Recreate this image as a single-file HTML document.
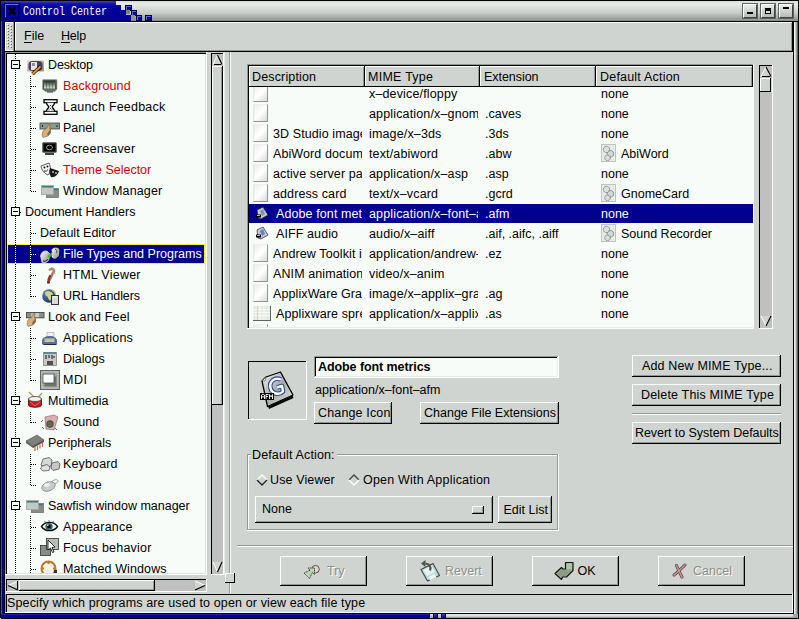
<!DOCTYPE html><html><head><meta charset="utf-8"><style>html,body{margin:0;padding:0;width:799px;height:619px;overflow:hidden;background:#000;}body>div,body>svg,div>div,div>svg{position:absolute;}*{font-family:"Liberation Sans",sans-serif;}</style></head><body><div style="left:0px;top:0px;width:799px;height:619px;background:#000000;"></div>
<div style="left:1px;top:1px;width:797px;height:617px;background:#d0d4d0;"></div>
<div style="left:1px;top:1px;width:1px;height:617px;background:#4848c8;"></div>
<div style="left:2px;top:2px;width:2px;height:616px;background:#0000a0;"></div>
<div style="left:4px;top:21px;width:1px;height:593px;background:#000000;"></div>
<div style="left:793px;top:21px;width:1px;height:593px;background:#000000;"></div>
<div style="left:794px;top:21px;width:1px;height:597px;background:#f0f4f0;"></div>
<div style="left:795px;top:21px;width:1px;height:597px;background:#c8ccc8;"></div>
<div style="left:796px;top:21px;width:1px;height:597px;background:#a0a4a0;"></div>
<div style="left:797px;top:21px;width:1px;height:597px;background:#606460;"></div>
<div style="left:798px;top:0px;width:1px;height:619px;background:#000000;"></div>
<div style="left:4px;top:613px;width:790px;height:1px;background:#000000;"></div>
<div style="left:1px;top:614px;width:428px;height:4px;background:linear-gradient(to bottom,#3030c0,#0000a0 40%,#000088);"></div>
<div style="left:446px;top:614px;width:347px;height:4px;background:linear-gradient(to bottom,#e8ece8,#d8dcd8 50%,#909490);"></div>
<div style="left:793px;top:614px;width:5px;height:4px;background:#a0a4a0;"></div>
<div style="left:429px;top:614px;width:17px;height:4px;background:#000030;"></div>
<div style="left:430px;top:614px;width:3px;height:4px;background:linear-gradient(to bottom,#e0e4e0,#a0a4a0);"></div>
<div style="left:434px;top:614px;width:3px;height:4px;background:linear-gradient(to bottom,#4040c8,#0000a0);"></div>
<div style="left:438px;top:614px;width:3px;height:4px;background:linear-gradient(to bottom,#e0e4e0,#a0a4a0);"></div>
<div style="left:442px;top:614px;width:3px;height:4px;background:linear-gradient(to bottom,#4040c8,#0000a0);"></div>
<div style="left:0px;top:618px;width:799px;height:1px;background:#000000;"></div>
<div style="left:0px;top:618px;width:1px;height:1px;background:#e0e0e0;"></div>
<div style="left:1px;top:1px;width:797px;height:20px;background:linear-gradient(to bottom,#d8dcd8 0px,#e8ece8 3px,#c8ccc8 12px,#8c908c 20px);"></div>
<div style="left:1px;top:1px;width:115px;height:20px;background:linear-gradient(to bottom,#4040c0 0px,#1010a8 3px,#0000a0 8px,#000088 20px);background-size:100% 20px;background-position:0 0px;"></div>
<div style="left:116px;top:5px;width:5px;height:16px;background:linear-gradient(to bottom,#4040c0 0px,#1010a8 3px,#0000a0 8px,#000088 20px);background-size:100% 20px;background-position:0 -4px;"></div>
<div style="left:121px;top:10px;width:5px;height:11px;background:linear-gradient(to bottom,#4040c0 0px,#1010a8 3px,#0000a0 8px,#000088 20px);background-size:100% 20px;background-position:0 -9px;"></div>
<div style="left:126px;top:15px;width:5px;height:6px;background:linear-gradient(to bottom,#4040c0 0px,#1010a8 3px,#0000a0 8px,#000088 20px);background-size:100% 20px;background-position:0 -14px;"></div>
<div style="left:125px;top:5px;width:7px;height:6px;background:#0000b0;border:1px solid #000040;box-sizing:border-box;box-shadow:inset 1px 1px 0 #6060d8;"></div>
<div style="left:131px;top:10px;width:6px;height:6px;background:#0000b0;border:1px solid #000040;box-sizing:border-box;box-shadow:inset 1px 1px 0 #6060d8;"></div>
<div style="left:136px;top:15px;width:6px;height:6px;background:#0000b0;border:1px solid #000040;box-sizing:border-box;box-shadow:inset 1px 1px 0 #6060d8;"></div>
<div style="left:145px;top:15px;width:7px;height:6px;background:#0000b0;border:1px solid #000040;box-sizing:border-box;box-shadow:inset 1px 1px 0 #6060d8;"></div>
<div style="left:126px;top:10px;width:4px;height:4px;background:#808480;"></div>
<div style="left:131px;top:15px;width:4px;height:5px;background:#909490;"></div>
<div style="left:4px;top:21px;width:794px;height:1px;background:#000000;"></div>
<div style="left:5px;top:4px;width:14px;height:14px;background:#0000a8;border-top:1px solid #6868d8;border-left:1px solid #6868d8;border-right:1px solid #000050;border-bottom:1px solid #000050;box-sizing:border-box;box-shadow:0 0 0 1px #000060;"></div>
<svg style="left:7px;top:6px;width:10px;height:10px;" viewBox="0 0 10 10"><path d="M1.5 1.5 L8.5 8.5 M8.5 1.5 L1.5 8.5" stroke="#000" stroke-width="2.6"/></svg>
<div style="left:23px;top:5.6px;font-size:10px;line-height:10px;color:#fff;white-space:nowrap;font-family:'Liberation Mono',monospace;transform:scaleY(1.35);transform-origin:0 0;">Control Center</div>
<div style="left:743px;top:4px;width:14px;height:14px;background:linear-gradient(to bottom,#e8ece8,#b8bcb8);border-top:1px solid #fff;border-left:1px solid #fff;border-right:1px solid #404040;border-bottom:1px solid #404040;box-sizing:border-box;box-shadow:0 0 0 1px #606460;"></div>
<div style="left:747px;top:12px;width:6px;height:2px;background:#000;"></div>
<div style="left:761px;top:4px;width:14px;height:14px;background:linear-gradient(to bottom,#e8ece8,#b8bcb8);border-top:1px solid #fff;border-left:1px solid #fff;border-right:1px solid #404040;border-bottom:1px solid #404040;box-sizing:border-box;box-shadow:0 0 0 1px #606460;"></div>
<div style="left:765px;top:8px;width:6px;height:6px;background:#000;"></div><div style="left:766px;top:11px;width:4px;height:2px;background:#e0e4e0;"></div>
<div style="left:779px;top:4px;width:14px;height:14px;background:linear-gradient(to bottom,#e8ece8,#b8bcb8);border-top:1px solid #fff;border-left:1px solid #fff;border-right:1px solid #404040;border-bottom:1px solid #404040;box-sizing:border-box;box-shadow:0 0 0 1px #606460;"></div>
<div style="left:783px;top:7px;width:6px;height:2px;background:#000;"></div>
<div style="left:5px;top:22px;width:788px;height:29px;background:#d0d4d0;"></div>
<div style="left:5px;top:22px;width:9px;height:29px;background:#ffffff;"></div>
<div style="left:6px;top:23px;width:7px;height:27px;background:#d0d4d0;"></div>
<div style="left:13px;top:22px;width:1px;height:29px;background:#949894;"></div>
<div style="left:7px;top:24px;width:1px;height:1px;background:#ffffff;"></div>
<div style="left:8px;top:25px;width:1px;height:1px;background:#606460;"></div>
<div style="left:10px;top:25px;width:1px;height:1px;background:#ffffff;"></div>
<div style="left:11px;top:26px;width:1px;height:1px;background:#606460;"></div>
<div style="left:7px;top:27px;width:1px;height:1px;background:#ffffff;"></div>
<div style="left:8px;top:28px;width:1px;height:1px;background:#606460;"></div>
<div style="left:10px;top:28px;width:1px;height:1px;background:#ffffff;"></div>
<div style="left:11px;top:29px;width:1px;height:1px;background:#606460;"></div>
<div style="left:7px;top:30px;width:1px;height:1px;background:#ffffff;"></div>
<div style="left:8px;top:31px;width:1px;height:1px;background:#606460;"></div>
<div style="left:10px;top:31px;width:1px;height:1px;background:#ffffff;"></div>
<div style="left:11px;top:32px;width:1px;height:1px;background:#606460;"></div>
<div style="left:7px;top:33px;width:1px;height:1px;background:#ffffff;"></div>
<div style="left:8px;top:34px;width:1px;height:1px;background:#606460;"></div>
<div style="left:10px;top:34px;width:1px;height:1px;background:#ffffff;"></div>
<div style="left:11px;top:35px;width:1px;height:1px;background:#606460;"></div>
<div style="left:7px;top:36px;width:1px;height:1px;background:#ffffff;"></div>
<div style="left:8px;top:37px;width:1px;height:1px;background:#606460;"></div>
<div style="left:10px;top:37px;width:1px;height:1px;background:#ffffff;"></div>
<div style="left:11px;top:38px;width:1px;height:1px;background:#606460;"></div>
<div style="left:7px;top:39px;width:1px;height:1px;background:#ffffff;"></div>
<div style="left:8px;top:40px;width:1px;height:1px;background:#606460;"></div>
<div style="left:10px;top:40px;width:1px;height:1px;background:#ffffff;"></div>
<div style="left:11px;top:41px;width:1px;height:1px;background:#606460;"></div>
<div style="left:7px;top:42px;width:1px;height:1px;background:#ffffff;"></div>
<div style="left:8px;top:43px;width:1px;height:1px;background:#606460;"></div>
<div style="left:10px;top:43px;width:1px;height:1px;background:#ffffff;"></div>
<div style="left:11px;top:44px;width:1px;height:1px;background:#606460;"></div>
<div style="left:7px;top:45px;width:1px;height:1px;background:#ffffff;"></div>
<div style="left:8px;top:46px;width:1px;height:1px;background:#606460;"></div>
<div style="left:10px;top:46px;width:1px;height:1px;background:#ffffff;"></div>
<div style="left:11px;top:47px;width:1px;height:1px;background:#606460;"></div>
<div style="left:14px;top:22px;width:1px;height:29px;background:#000000;"></div>
<div style="left:15px;top:22px;width:778px;height:1px;background:#ffffff;"></div>
<div style="left:15px;top:22px;width:1px;height:29px;background:#ffffff;"></div>
<div style="left:15px;top:50px;width:778px;height:1px;background:#949894;"></div>
<div style="left:791px;top:23px;width:1px;height:27px;background:#949894;"></div>
<div style="left:792px;top:22px;width:1px;height:29px;background:#000000;"></div>
<div style="left:5px;top:51px;width:788px;height:1px;background:#000000;"></div>
<div style="left:24px;top:29.00px;font-size:12.5px;line-height:14px;color:#000;white-space:nowrap;font-family:'Liberation Sans', sans-serif;letter-spacing:0px;">File</div>
<div style="left:24px;top:42px;width:8px;height:1px;background:#000000;"></div>
<div style="left:61px;top:29.00px;font-size:12.5px;line-height:14px;color:#000;white-space:nowrap;font-family:'Liberation Sans', sans-serif;letter-spacing:-0.2px;">Help</div>
<div style="left:61px;top:42px;width:9px;height:1px;background:#000000;"></div>
<div style="left:5px;top:52px;width:202px;height:523px;background:#d0d4d0;"></div>
<div style="left:5px;top:52px;width:202px;height:1px;background:#949894;"></div>
<div style="left:5px;top:52px;width:1px;height:523px;background:#949894;"></div>
<div style="left:6px;top:53px;width:200px;height:1px;background:#000000;"></div>
<div style="left:6px;top:53px;width:1px;height:521px;background:#000000;"></div>
<div style="left:7px;top:54px;width:198px;height:519px;background:#f8fcf8;"></div>
<div style="left:7px;top:573px;width:199px;height:1px;background:#e0e4e0;"></div>
<div style="left:205px;top:54px;width:1px;height:520px;background:#e0e4e0;"></div>
<div style="left:5px;top:574px;width:202px;height:1px;background:#ffffff;"></div>
<div style="left:206px;top:52px;width:1px;height:523px;background:#ffffff;"></div>
<div style="left:7px;top:54px;width:198px;height:519px;overflow:hidden;position:absolute;"><div style="left:-7px;top:-54px;width:799px;height:619px;position:absolute;"><div style="left:7px;top:244px;width:198px;height:20px;background:#f0f040;"></div><div style="left:8px;top:245px;width:196px;height:18px;background:#000090;"></div><div style="left:15px;top:54px;width:1px;height:1px;background:#000;"></div><div style="left:15px;top:56px;width:1px;height:1px;background:#000;"></div><div style="left:15px;top:58px;width:1px;height:1px;background:#000;"></div><div style="left:15px;top:70px;width:1px;height:1px;background:#000;"></div><div style="left:15px;top:72px;width:1px;height:1px;background:#000;"></div><div style="left:15px;top:74px;width:1px;height:1px;background:#000;"></div><div style="left:15px;top:76px;width:1px;height:1px;background:#000;"></div><div style="left:15px;top:78px;width:1px;height:1px;background:#000;"></div><div style="left:15px;top:80px;width:1px;height:1px;background:#000;"></div><div style="left:15px;top:82px;width:1px;height:1px;background:#000;"></div><div style="left:15px;top:84px;width:1px;height:1px;background:#000;"></div><div style="left:15px;top:86px;width:1px;height:1px;background:#000;"></div><div style="left:15px;top:88px;width:1px;height:1px;background:#000;"></div><div style="left:15px;top:90px;width:1px;height:1px;background:#000;"></div><div style="left:15px;top:92px;width:1px;height:1px;background:#000;"></div><div style="left:15px;top:94px;width:1px;height:1px;background:#000;"></div><div style="left:15px;top:96px;width:1px;height:1px;background:#000;"></div><div style="left:15px;top:98px;width:1px;height:1px;background:#000;"></div><div style="left:15px;top:100px;width:1px;height:1px;background:#000;"></div><div style="left:15px;top:102px;width:1px;height:1px;background:#000;"></div><div style="left:15px;top:104px;width:1px;height:1px;background:#000;"></div><div style="left:15px;top:106px;width:1px;height:1px;background:#000;"></div><div style="left:15px;top:108px;width:1px;height:1px;background:#000;"></div><div style="left:15px;top:110px;width:1px;height:1px;background:#000;"></div><div style="left:15px;top:112px;width:1px;height:1px;background:#000;"></div><div style="left:15px;top:114px;width:1px;height:1px;background:#000;"></div><div style="left:15px;top:116px;width:1px;height:1px;background:#000;"></div><div style="left:15px;top:118px;width:1px;height:1px;background:#000;"></div><div style="left:15px;top:120px;width:1px;height:1px;background:#000;"></div><div style="left:15px;top:122px;width:1px;height:1px;background:#000;"></div><div style="left:15px;top:124px;width:1px;height:1px;background:#000;"></div><div style="left:15px;top:126px;width:1px;height:1px;background:#000;"></div><div style="left:15px;top:128px;width:1px;height:1px;background:#000;"></div><div style="left:15px;top:130px;width:1px;height:1px;background:#000;"></div><div style="left:15px;top:132px;width:1px;height:1px;background:#000;"></div><div style="left:15px;top:134px;width:1px;height:1px;background:#000;"></div><div style="left:15px;top:136px;width:1px;height:1px;background:#000;"></div><div style="left:15px;top:138px;width:1px;height:1px;background:#000;"></div><div style="left:15px;top:140px;width:1px;height:1px;background:#000;"></div><div style="left:15px;top:142px;width:1px;height:1px;background:#000;"></div><div style="left:15px;top:144px;width:1px;height:1px;background:#000;"></div><div style="left:15px;top:146px;width:1px;height:1px;background:#000;"></div><div style="left:15px;top:148px;width:1px;height:1px;background:#000;"></div><div style="left:15px;top:150px;width:1px;height:1px;background:#000;"></div><div style="left:15px;top:152px;width:1px;height:1px;background:#000;"></div><div style="left:15px;top:154px;width:1px;height:1px;background:#000;"></div><div style="left:15px;top:156px;width:1px;height:1px;background:#000;"></div><div style="left:15px;top:158px;width:1px;height:1px;background:#000;"></div><div style="left:15px;top:160px;width:1px;height:1px;background:#000;"></div><div style="left:15px;top:162px;width:1px;height:1px;background:#000;"></div><div style="left:15px;top:164px;width:1px;height:1px;background:#000;"></div><div style="left:15px;top:166px;width:1px;height:1px;background:#000;"></div><div style="left:15px;top:168px;width:1px;height:1px;background:#000;"></div><div style="left:15px;top:170px;width:1px;height:1px;background:#000;"></div><div style="left:15px;top:172px;width:1px;height:1px;background:#000;"></div><div style="left:15px;top:174px;width:1px;height:1px;background:#000;"></div><div style="left:15px;top:176px;width:1px;height:1px;background:#000;"></div><div style="left:15px;top:178px;width:1px;height:1px;background:#000;"></div><div style="left:15px;top:180px;width:1px;height:1px;background:#000;"></div><div style="left:15px;top:182px;width:1px;height:1px;background:#000;"></div><div style="left:15px;top:184px;width:1px;height:1px;background:#000;"></div><div style="left:15px;top:186px;width:1px;height:1px;background:#000;"></div><div style="left:15px;top:188px;width:1px;height:1px;background:#000;"></div><div style="left:15px;top:190px;width:1px;height:1px;background:#000;"></div><div style="left:15px;top:192px;width:1px;height:1px;background:#000;"></div><div style="left:15px;top:194px;width:1px;height:1px;background:#000;"></div><div style="left:15px;top:196px;width:1px;height:1px;background:#000;"></div><div style="left:15px;top:198px;width:1px;height:1px;background:#000;"></div><div style="left:15px;top:200px;width:1px;height:1px;background:#000;"></div><div style="left:15px;top:202px;width:1px;height:1px;background:#000;"></div><div style="left:15px;top:204px;width:1px;height:1px;background:#000;"></div><div style="left:15px;top:206px;width:1px;height:1px;background:#000;"></div><div style="left:15px;top:216px;width:1px;height:1px;background:#000;"></div><div style="left:15px;top:218px;width:1px;height:1px;background:#000;"></div><div style="left:15px;top:220px;width:1px;height:1px;background:#000;"></div><div style="left:15px;top:222px;width:1px;height:1px;background:#000;"></div><div style="left:15px;top:224px;width:1px;height:1px;background:#000;"></div><div style="left:15px;top:226px;width:1px;height:1px;background:#000;"></div><div style="left:15px;top:228px;width:1px;height:1px;background:#000;"></div><div style="left:15px;top:230px;width:1px;height:1px;background:#000;"></div><div style="left:15px;top:232px;width:1px;height:1px;background:#000;"></div><div style="left:15px;top:234px;width:1px;height:1px;background:#000;"></div><div style="left:15px;top:236px;width:1px;height:1px;background:#000;"></div><div style="left:15px;top:238px;width:1px;height:1px;background:#000;"></div><div style="left:15px;top:240px;width:1px;height:1px;background:#000;"></div><div style="left:15px;top:242px;width:1px;height:1px;background:#000;"></div><div style="left:15px;top:244px;width:1px;height:1px;background:#000;"></div><div style="left:15px;top:246px;width:1px;height:1px;background:#fff;"></div><div style="left:15px;top:248px;width:1px;height:1px;background:#fff;"></div><div style="left:15px;top:250px;width:1px;height:1px;background:#fff;"></div><div style="left:15px;top:252px;width:1px;height:1px;background:#fff;"></div><div style="left:15px;top:254px;width:1px;height:1px;background:#fff;"></div><div style="left:15px;top:256px;width:1px;height:1px;background:#fff;"></div><div style="left:15px;top:258px;width:1px;height:1px;background:#fff;"></div><div style="left:15px;top:260px;width:1px;height:1px;background:#fff;"></div><div style="left:15px;top:262px;width:1px;height:1px;background:#fff;"></div><div style="left:15px;top:264px;width:1px;height:1px;background:#000;"></div><div style="left:15px;top:266px;width:1px;height:1px;background:#000;"></div><div style="left:15px;top:268px;width:1px;height:1px;background:#000;"></div><div style="left:15px;top:270px;width:1px;height:1px;background:#000;"></div><div style="left:15px;top:272px;width:1px;height:1px;background:#000;"></div><div style="left:15px;top:274px;width:1px;height:1px;background:#000;"></div><div style="left:15px;top:276px;width:1px;height:1px;background:#000;"></div><div style="left:15px;top:278px;width:1px;height:1px;background:#000;"></div><div style="left:15px;top:280px;width:1px;height:1px;background:#000;"></div><div style="left:15px;top:282px;width:1px;height:1px;background:#000;"></div><div style="left:15px;top:284px;width:1px;height:1px;background:#000;"></div><div style="left:15px;top:286px;width:1px;height:1px;background:#000;"></div><div style="left:15px;top:288px;width:1px;height:1px;background:#000;"></div><div style="left:15px;top:290px;width:1px;height:1px;background:#000;"></div><div style="left:15px;top:292px;width:1px;height:1px;background:#000;"></div><div style="left:15px;top:294px;width:1px;height:1px;background:#000;"></div><div style="left:15px;top:296px;width:1px;height:1px;background:#000;"></div><div style="left:15px;top:298px;width:1px;height:1px;background:#000;"></div><div style="left:15px;top:300px;width:1px;height:1px;background:#000;"></div><div style="left:15px;top:302px;width:1px;height:1px;background:#000;"></div><div style="left:15px;top:304px;width:1px;height:1px;background:#000;"></div><div style="left:15px;top:306px;width:1px;height:1px;background:#000;"></div><div style="left:15px;top:308px;width:1px;height:1px;background:#000;"></div><div style="left:15px;top:310px;width:1px;height:1px;background:#000;"></div><div style="left:15px;top:322px;width:1px;height:1px;background:#000;"></div><div style="left:15px;top:324px;width:1px;height:1px;background:#000;"></div><div style="left:15px;top:326px;width:1px;height:1px;background:#000;"></div><div style="left:15px;top:328px;width:1px;height:1px;background:#000;"></div><div style="left:15px;top:330px;width:1px;height:1px;background:#000;"></div><div style="left:15px;top:332px;width:1px;height:1px;background:#000;"></div><div style="left:15px;top:334px;width:1px;height:1px;background:#000;"></div><div style="left:15px;top:336px;width:1px;height:1px;background:#000;"></div><div style="left:15px;top:338px;width:1px;height:1px;background:#000;"></div><div style="left:15px;top:340px;width:1px;height:1px;background:#000;"></div><div style="left:15px;top:342px;width:1px;height:1px;background:#000;"></div><div style="left:15px;top:344px;width:1px;height:1px;background:#000;"></div><div style="left:15px;top:346px;width:1px;height:1px;background:#000;"></div><div style="left:15px;top:348px;width:1px;height:1px;background:#000;"></div><div style="left:15px;top:350px;width:1px;height:1px;background:#000;"></div><div style="left:15px;top:352px;width:1px;height:1px;background:#000;"></div><div style="left:15px;top:354px;width:1px;height:1px;background:#000;"></div><div style="left:15px;top:356px;width:1px;height:1px;background:#000;"></div><div style="left:15px;top:358px;width:1px;height:1px;background:#000;"></div><div style="left:15px;top:360px;width:1px;height:1px;background:#000;"></div><div style="left:15px;top:362px;width:1px;height:1px;background:#000;"></div><div style="left:15px;top:364px;width:1px;height:1px;background:#000;"></div><div style="left:15px;top:366px;width:1px;height:1px;background:#000;"></div><div style="left:15px;top:368px;width:1px;height:1px;background:#000;"></div><div style="left:15px;top:370px;width:1px;height:1px;background:#000;"></div><div style="left:15px;top:372px;width:1px;height:1px;background:#000;"></div><div style="left:15px;top:374px;width:1px;height:1px;background:#000;"></div><div style="left:15px;top:376px;width:1px;height:1px;background:#000;"></div><div style="left:15px;top:378px;width:1px;height:1px;background:#000;"></div><div style="left:15px;top:380px;width:1px;height:1px;background:#000;"></div><div style="left:15px;top:382px;width:1px;height:1px;background:#000;"></div><div style="left:15px;top:384px;width:1px;height:1px;background:#000;"></div><div style="left:15px;top:386px;width:1px;height:1px;background:#000;"></div><div style="left:15px;top:388px;width:1px;height:1px;background:#000;"></div><div style="left:15px;top:390px;width:1px;height:1px;background:#000;"></div><div style="left:15px;top:392px;width:1px;height:1px;background:#000;"></div><div style="left:15px;top:394px;width:1px;height:1px;background:#000;"></div><div style="left:15px;top:406px;width:1px;height:1px;background:#000;"></div><div style="left:15px;top:408px;width:1px;height:1px;background:#000;"></div><div style="left:15px;top:410px;width:1px;height:1px;background:#000;"></div><div style="left:15px;top:412px;width:1px;height:1px;background:#000;"></div><div style="left:15px;top:414px;width:1px;height:1px;background:#000;"></div><div style="left:15px;top:416px;width:1px;height:1px;background:#000;"></div><div style="left:15px;top:418px;width:1px;height:1px;background:#000;"></div><div style="left:15px;top:420px;width:1px;height:1px;background:#000;"></div><div style="left:15px;top:422px;width:1px;height:1px;background:#000;"></div><div style="left:15px;top:424px;width:1px;height:1px;background:#000;"></div><div style="left:15px;top:426px;width:1px;height:1px;background:#000;"></div><div style="left:15px;top:428px;width:1px;height:1px;background:#000;"></div><div style="left:15px;top:430px;width:1px;height:1px;background:#000;"></div><div style="left:15px;top:432px;width:1px;height:1px;background:#000;"></div><div style="left:15px;top:434px;width:1px;height:1px;background:#000;"></div><div style="left:15px;top:436px;width:1px;height:1px;background:#000;"></div><div style="left:15px;top:448px;width:1px;height:1px;background:#000;"></div><div style="left:15px;top:450px;width:1px;height:1px;background:#000;"></div><div style="left:15px;top:452px;width:1px;height:1px;background:#000;"></div><div style="left:15px;top:454px;width:1px;height:1px;background:#000;"></div><div style="left:15px;top:456px;width:1px;height:1px;background:#000;"></div><div style="left:15px;top:458px;width:1px;height:1px;background:#000;"></div><div style="left:15px;top:460px;width:1px;height:1px;background:#000;"></div><div style="left:15px;top:462px;width:1px;height:1px;background:#000;"></div><div style="left:15px;top:464px;width:1px;height:1px;background:#000;"></div><div style="left:15px;top:466px;width:1px;height:1px;background:#000;"></div><div style="left:15px;top:468px;width:1px;height:1px;background:#000;"></div><div style="left:15px;top:470px;width:1px;height:1px;background:#000;"></div><div style="left:15px;top:472px;width:1px;height:1px;background:#000;"></div><div style="left:15px;top:474px;width:1px;height:1px;background:#000;"></div><div style="left:15px;top:476px;width:1px;height:1px;background:#000;"></div><div style="left:15px;top:478px;width:1px;height:1px;background:#000;"></div><div style="left:15px;top:480px;width:1px;height:1px;background:#000;"></div><div style="left:15px;top:482px;width:1px;height:1px;background:#000;"></div><div style="left:15px;top:484px;width:1px;height:1px;background:#000;"></div><div style="left:15px;top:486px;width:1px;height:1px;background:#000;"></div><div style="left:15px;top:488px;width:1px;height:1px;background:#000;"></div><div style="left:15px;top:490px;width:1px;height:1px;background:#000;"></div><div style="left:15px;top:492px;width:1px;height:1px;background:#000;"></div><div style="left:15px;top:494px;width:1px;height:1px;background:#000;"></div><div style="left:15px;top:496px;width:1px;height:1px;background:#000;"></div><div style="left:15px;top:498px;width:1px;height:1px;background:#000;"></div><div style="left:15px;top:500px;width:1px;height:1px;background:#000;"></div><div style="left:15px;top:510px;width:1px;height:1px;background:#000;"></div><div style="left:15px;top:512px;width:1px;height:1px;background:#000;"></div><div style="left:15px;top:514px;width:1px;height:1px;background:#000;"></div><div style="left:15px;top:516px;width:1px;height:1px;background:#000;"></div><div style="left:15px;top:518px;width:1px;height:1px;background:#000;"></div><div style="left:15px;top:520px;width:1px;height:1px;background:#000;"></div><div style="left:15px;top:522px;width:1px;height:1px;background:#000;"></div><div style="left:15px;top:524px;width:1px;height:1px;background:#000;"></div><div style="left:15px;top:526px;width:1px;height:1px;background:#000;"></div><div style="left:15px;top:528px;width:1px;height:1px;background:#000;"></div><div style="left:15px;top:530px;width:1px;height:1px;background:#000;"></div><div style="left:15px;top:532px;width:1px;height:1px;background:#000;"></div><div style="left:15px;top:534px;width:1px;height:1px;background:#000;"></div><div style="left:15px;top:536px;width:1px;height:1px;background:#000;"></div><div style="left:15px;top:538px;width:1px;height:1px;background:#000;"></div><div style="left:15px;top:540px;width:1px;height:1px;background:#000;"></div><div style="left:15px;top:542px;width:1px;height:1px;background:#000;"></div><div style="left:15px;top:544px;width:1px;height:1px;background:#000;"></div><div style="left:15px;top:546px;width:1px;height:1px;background:#000;"></div><div style="left:15px;top:548px;width:1px;height:1px;background:#000;"></div><div style="left:15px;top:550px;width:1px;height:1px;background:#000;"></div><div style="left:15px;top:552px;width:1px;height:1px;background:#000;"></div><div style="left:15px;top:554px;width:1px;height:1px;background:#000;"></div><div style="left:15px;top:556px;width:1px;height:1px;background:#000;"></div><div style="left:15px;top:558px;width:1px;height:1px;background:#000;"></div><div style="left:15px;top:560px;width:1px;height:1px;background:#000;"></div><div style="left:15px;top:562px;width:1px;height:1px;background:#000;"></div><div style="left:15px;top:564px;width:1px;height:1px;background:#000;"></div><div style="left:15px;top:566px;width:1px;height:1px;background:#000;"></div><div style="left:15px;top:568px;width:1px;height:1px;background:#000;"></div><div style="left:15px;top:570px;width:1px;height:1px;background:#000;"></div><div style="left:15px;top:572px;width:1px;height:1px;background:#000;"></div><div style="left:11px;top:60px;width:9px;height:9px;background:#000;"></div><div style="left:12px;top:61px;width:7px;height:7px;background:#f8fcf8;"></div><div style="left:13px;top:64px;width:5px;height:1px;background:#000;"></div><div style="left:20px;top:65px;width:1px;height:1px;background:#000;"></div><div style="left:11px;top:207px;width:9px;height:9px;background:#000;"></div><div style="left:12px;top:208px;width:7px;height:7px;background:#f8fcf8;"></div><div style="left:13px;top:211px;width:5px;height:1px;background:#000;"></div><div style="left:20px;top:212px;width:1px;height:1px;background:#000;"></div><div style="left:11px;top:312px;width:9px;height:9px;background:#000;"></div><div style="left:12px;top:313px;width:7px;height:7px;background:#f8fcf8;"></div><div style="left:13px;top:316px;width:5px;height:1px;background:#000;"></div><div style="left:20px;top:317px;width:1px;height:1px;background:#000;"></div><div style="left:11px;top:396px;width:9px;height:9px;background:#000;"></div><div style="left:12px;top:397px;width:7px;height:7px;background:#f8fcf8;"></div><div style="left:13px;top:400px;width:5px;height:1px;background:#000;"></div><div style="left:20px;top:401px;width:1px;height:1px;background:#000;"></div><div style="left:11px;top:438px;width:9px;height:9px;background:#000;"></div><div style="left:12px;top:439px;width:7px;height:7px;background:#f8fcf8;"></div><div style="left:13px;top:442px;width:5px;height:1px;background:#000;"></div><div style="left:20px;top:443px;width:1px;height:1px;background:#000;"></div><div style="left:11px;top:501px;width:9px;height:9px;background:#000;"></div><div style="left:12px;top:502px;width:7px;height:7px;background:#f8fcf8;"></div><div style="left:13px;top:505px;width:5px;height:1px;background:#000;"></div><div style="left:20px;top:506px;width:1px;height:1px;background:#000;"></div><div style="left:30px;top:76px;width:1px;height:1px;background:#000;"></div><div style="left:30px;top:78px;width:1px;height:1px;background:#000;"></div><div style="left:30px;top:80px;width:1px;height:1px;background:#000;"></div><div style="left:30px;top:82px;width:1px;height:1px;background:#000;"></div><div style="left:30px;top:84px;width:1px;height:1px;background:#000;"></div><div style="left:30px;top:86px;width:1px;height:1px;background:#000;"></div><div style="left:30px;top:88px;width:1px;height:1px;background:#000;"></div><div style="left:30px;top:90px;width:1px;height:1px;background:#000;"></div><div style="left:30px;top:92px;width:1px;height:1px;background:#000;"></div><div style="left:30px;top:94px;width:1px;height:1px;background:#000;"></div><div style="left:30px;top:96px;width:1px;height:1px;background:#000;"></div><div style="left:30px;top:98px;width:1px;height:1px;background:#000;"></div><div style="left:30px;top:100px;width:1px;height:1px;background:#000;"></div><div style="left:30px;top:102px;width:1px;height:1px;background:#000;"></div><div style="left:30px;top:104px;width:1px;height:1px;background:#000;"></div><div style="left:30px;top:106px;width:1px;height:1px;background:#000;"></div><div style="left:30px;top:108px;width:1px;height:1px;background:#000;"></div><div style="left:30px;top:110px;width:1px;height:1px;background:#000;"></div><div style="left:30px;top:112px;width:1px;height:1px;background:#000;"></div><div style="left:30px;top:114px;width:1px;height:1px;background:#000;"></div><div style="left:30px;top:116px;width:1px;height:1px;background:#000;"></div><div style="left:30px;top:118px;width:1px;height:1px;background:#000;"></div><div style="left:30px;top:120px;width:1px;height:1px;background:#000;"></div><div style="left:30px;top:122px;width:1px;height:1px;background:#000;"></div><div style="left:30px;top:124px;width:1px;height:1px;background:#000;"></div><div style="left:30px;top:126px;width:1px;height:1px;background:#000;"></div><div style="left:30px;top:128px;width:1px;height:1px;background:#000;"></div><div style="left:30px;top:130px;width:1px;height:1px;background:#000;"></div><div style="left:30px;top:132px;width:1px;height:1px;background:#000;"></div><div style="left:30px;top:134px;width:1px;height:1px;background:#000;"></div><div style="left:30px;top:136px;width:1px;height:1px;background:#000;"></div><div style="left:30px;top:138px;width:1px;height:1px;background:#000;"></div><div style="left:30px;top:140px;width:1px;height:1px;background:#000;"></div><div style="left:30px;top:142px;width:1px;height:1px;background:#000;"></div><div style="left:30px;top:144px;width:1px;height:1px;background:#000;"></div><div style="left:30px;top:146px;width:1px;height:1px;background:#000;"></div><div style="left:30px;top:148px;width:1px;height:1px;background:#000;"></div><div style="left:30px;top:150px;width:1px;height:1px;background:#000;"></div><div style="left:30px;top:152px;width:1px;height:1px;background:#000;"></div><div style="left:30px;top:154px;width:1px;height:1px;background:#000;"></div><div style="left:30px;top:156px;width:1px;height:1px;background:#000;"></div><div style="left:30px;top:158px;width:1px;height:1px;background:#000;"></div><div style="left:30px;top:160px;width:1px;height:1px;background:#000;"></div><div style="left:30px;top:162px;width:1px;height:1px;background:#000;"></div><div style="left:30px;top:164px;width:1px;height:1px;background:#000;"></div><div style="left:30px;top:166px;width:1px;height:1px;background:#000;"></div><div style="left:30px;top:168px;width:1px;height:1px;background:#000;"></div><div style="left:30px;top:170px;width:1px;height:1px;background:#000;"></div><div style="left:30px;top:172px;width:1px;height:1px;background:#000;"></div><div style="left:30px;top:174px;width:1px;height:1px;background:#000;"></div><div style="left:30px;top:176px;width:1px;height:1px;background:#000;"></div><div style="left:30px;top:178px;width:1px;height:1px;background:#000;"></div><div style="left:30px;top:180px;width:1px;height:1px;background:#000;"></div><div style="left:30px;top:182px;width:1px;height:1px;background:#000;"></div><div style="left:30px;top:184px;width:1px;height:1px;background:#000;"></div><div style="left:30px;top:186px;width:1px;height:1px;background:#000;"></div><div style="left:30px;top:188px;width:1px;height:1px;background:#000;"></div><div style="left:30px;top:190px;width:1px;height:1px;background:#000;"></div><div style="left:31px;top:86px;width:1px;height:1px;background:#000;"></div><div style="left:33px;top:86px;width:1px;height:1px;background:#000;"></div><div style="left:35px;top:86px;width:1px;height:1px;background:#000;"></div><div style="left:31px;top:107px;width:1px;height:1px;background:#000;"></div><div style="left:33px;top:107px;width:1px;height:1px;background:#000;"></div><div style="left:35px;top:107px;width:1px;height:1px;background:#000;"></div><div style="left:31px;top:128px;width:1px;height:1px;background:#000;"></div><div style="left:33px;top:128px;width:1px;height:1px;background:#000;"></div><div style="left:35px;top:128px;width:1px;height:1px;background:#000;"></div><div style="left:31px;top:149px;width:1px;height:1px;background:#000;"></div><div style="left:33px;top:149px;width:1px;height:1px;background:#000;"></div><div style="left:35px;top:149px;width:1px;height:1px;background:#000;"></div><div style="left:31px;top:170px;width:1px;height:1px;background:#000;"></div><div style="left:33px;top:170px;width:1px;height:1px;background:#000;"></div><div style="left:35px;top:170px;width:1px;height:1px;background:#000;"></div><div style="left:31px;top:191px;width:1px;height:1px;background:#000;"></div><div style="left:33px;top:191px;width:1px;height:1px;background:#000;"></div><div style="left:35px;top:191px;width:1px;height:1px;background:#000;"></div><div style="left:30px;top:222px;width:1px;height:1px;background:#000;"></div><div style="left:30px;top:224px;width:1px;height:1px;background:#000;"></div><div style="left:30px;top:226px;width:1px;height:1px;background:#000;"></div><div style="left:30px;top:228px;width:1px;height:1px;background:#000;"></div><div style="left:30px;top:230px;width:1px;height:1px;background:#000;"></div><div style="left:30px;top:232px;width:1px;height:1px;background:#000;"></div><div style="left:30px;top:234px;width:1px;height:1px;background:#000;"></div><div style="left:30px;top:236px;width:1px;height:1px;background:#000;"></div><div style="left:30px;top:238px;width:1px;height:1px;background:#000;"></div><div style="left:30px;top:240px;width:1px;height:1px;background:#000;"></div><div style="left:30px;top:242px;width:1px;height:1px;background:#000;"></div><div style="left:30px;top:244px;width:1px;height:1px;background:#000;"></div><div style="left:30px;top:246px;width:1px;height:1px;background:#fff;"></div><div style="left:30px;top:248px;width:1px;height:1px;background:#fff;"></div><div style="left:30px;top:250px;width:1px;height:1px;background:#fff;"></div><div style="left:30px;top:252px;width:1px;height:1px;background:#fff;"></div><div style="left:30px;top:254px;width:1px;height:1px;background:#fff;"></div><div style="left:30px;top:256px;width:1px;height:1px;background:#fff;"></div><div style="left:30px;top:258px;width:1px;height:1px;background:#fff;"></div><div style="left:30px;top:260px;width:1px;height:1px;background:#fff;"></div><div style="left:30px;top:262px;width:1px;height:1px;background:#fff;"></div><div style="left:30px;top:264px;width:1px;height:1px;background:#000;"></div><div style="left:30px;top:266px;width:1px;height:1px;background:#000;"></div><div style="left:30px;top:268px;width:1px;height:1px;background:#000;"></div><div style="left:30px;top:270px;width:1px;height:1px;background:#000;"></div><div style="left:30px;top:272px;width:1px;height:1px;background:#000;"></div><div style="left:30px;top:274px;width:1px;height:1px;background:#000;"></div><div style="left:30px;top:276px;width:1px;height:1px;background:#000;"></div><div style="left:30px;top:278px;width:1px;height:1px;background:#000;"></div><div style="left:30px;top:280px;width:1px;height:1px;background:#000;"></div><div style="left:30px;top:282px;width:1px;height:1px;background:#000;"></div><div style="left:30px;top:284px;width:1px;height:1px;background:#000;"></div><div style="left:30px;top:286px;width:1px;height:1px;background:#000;"></div><div style="left:30px;top:288px;width:1px;height:1px;background:#000;"></div><div style="left:30px;top:290px;width:1px;height:1px;background:#000;"></div><div style="left:30px;top:292px;width:1px;height:1px;background:#000;"></div><div style="left:30px;top:294px;width:1px;height:1px;background:#000;"></div><div style="left:30px;top:296px;width:1px;height:1px;background:#000;"></div><div style="left:31px;top:233px;width:1px;height:1px;background:#000;"></div><div style="left:33px;top:233px;width:1px;height:1px;background:#000;"></div><div style="left:35px;top:233px;width:1px;height:1px;background:#000;"></div><div style="left:31px;top:254px;width:1px;height:1px;background:#fff;"></div><div style="left:33px;top:254px;width:1px;height:1px;background:#fff;"></div><div style="left:35px;top:254px;width:1px;height:1px;background:#fff;"></div><div style="left:31px;top:275px;width:1px;height:1px;background:#000;"></div><div style="left:33px;top:275px;width:1px;height:1px;background:#000;"></div><div style="left:35px;top:275px;width:1px;height:1px;background:#000;"></div><div style="left:31px;top:296px;width:1px;height:1px;background:#000;"></div><div style="left:33px;top:296px;width:1px;height:1px;background:#000;"></div><div style="left:35px;top:296px;width:1px;height:1px;background:#000;"></div><div style="left:30px;top:328px;width:1px;height:1px;background:#000;"></div><div style="left:30px;top:330px;width:1px;height:1px;background:#000;"></div><div style="left:30px;top:332px;width:1px;height:1px;background:#000;"></div><div style="left:30px;top:334px;width:1px;height:1px;background:#000;"></div><div style="left:30px;top:336px;width:1px;height:1px;background:#000;"></div><div style="left:30px;top:338px;width:1px;height:1px;background:#000;"></div><div style="left:30px;top:340px;width:1px;height:1px;background:#000;"></div><div style="left:30px;top:342px;width:1px;height:1px;background:#000;"></div><div style="left:30px;top:344px;width:1px;height:1px;background:#000;"></div><div style="left:30px;top:346px;width:1px;height:1px;background:#000;"></div><div style="left:30px;top:348px;width:1px;height:1px;background:#000;"></div><div style="left:30px;top:350px;width:1px;height:1px;background:#000;"></div><div style="left:30px;top:352px;width:1px;height:1px;background:#000;"></div><div style="left:30px;top:354px;width:1px;height:1px;background:#000;"></div><div style="left:30px;top:356px;width:1px;height:1px;background:#000;"></div><div style="left:30px;top:358px;width:1px;height:1px;background:#000;"></div><div style="left:30px;top:360px;width:1px;height:1px;background:#000;"></div><div style="left:30px;top:362px;width:1px;height:1px;background:#000;"></div><div style="left:30px;top:364px;width:1px;height:1px;background:#000;"></div><div style="left:30px;top:366px;width:1px;height:1px;background:#000;"></div><div style="left:30px;top:368px;width:1px;height:1px;background:#000;"></div><div style="left:30px;top:370px;width:1px;height:1px;background:#000;"></div><div style="left:30px;top:372px;width:1px;height:1px;background:#000;"></div><div style="left:30px;top:374px;width:1px;height:1px;background:#000;"></div><div style="left:30px;top:376px;width:1px;height:1px;background:#000;"></div><div style="left:30px;top:378px;width:1px;height:1px;background:#000;"></div><div style="left:30px;top:380px;width:1px;height:1px;background:#000;"></div><div style="left:31px;top:338px;width:1px;height:1px;background:#000;"></div><div style="left:33px;top:338px;width:1px;height:1px;background:#000;"></div><div style="left:35px;top:338px;width:1px;height:1px;background:#000;"></div><div style="left:31px;top:359px;width:1px;height:1px;background:#000;"></div><div style="left:33px;top:359px;width:1px;height:1px;background:#000;"></div><div style="left:35px;top:359px;width:1px;height:1px;background:#000;"></div><div style="left:31px;top:380px;width:1px;height:1px;background:#000;"></div><div style="left:33px;top:380px;width:1px;height:1px;background:#000;"></div><div style="left:35px;top:380px;width:1px;height:1px;background:#000;"></div><div style="left:30px;top:412px;width:1px;height:1px;background:#000;"></div><div style="left:30px;top:414px;width:1px;height:1px;background:#000;"></div><div style="left:30px;top:416px;width:1px;height:1px;background:#000;"></div><div style="left:30px;top:418px;width:1px;height:1px;background:#000;"></div><div style="left:30px;top:420px;width:1px;height:1px;background:#000;"></div><div style="left:30px;top:422px;width:1px;height:1px;background:#000;"></div><div style="left:31px;top:422px;width:1px;height:1px;background:#000;"></div><div style="left:33px;top:422px;width:1px;height:1px;background:#000;"></div><div style="left:35px;top:422px;width:1px;height:1px;background:#000;"></div><div style="left:30px;top:454px;width:1px;height:1px;background:#000;"></div><div style="left:30px;top:456px;width:1px;height:1px;background:#000;"></div><div style="left:30px;top:458px;width:1px;height:1px;background:#000;"></div><div style="left:30px;top:460px;width:1px;height:1px;background:#000;"></div><div style="left:30px;top:462px;width:1px;height:1px;background:#000;"></div><div style="left:30px;top:464px;width:1px;height:1px;background:#000;"></div><div style="left:30px;top:466px;width:1px;height:1px;background:#000;"></div><div style="left:30px;top:468px;width:1px;height:1px;background:#000;"></div><div style="left:30px;top:470px;width:1px;height:1px;background:#000;"></div><div style="left:30px;top:472px;width:1px;height:1px;background:#000;"></div><div style="left:30px;top:474px;width:1px;height:1px;background:#000;"></div><div style="left:30px;top:476px;width:1px;height:1px;background:#000;"></div><div style="left:30px;top:478px;width:1px;height:1px;background:#000;"></div><div style="left:30px;top:480px;width:1px;height:1px;background:#000;"></div><div style="left:30px;top:482px;width:1px;height:1px;background:#000;"></div><div style="left:30px;top:484px;width:1px;height:1px;background:#000;"></div><div style="left:31px;top:464px;width:1px;height:1px;background:#000;"></div><div style="left:33px;top:464px;width:1px;height:1px;background:#000;"></div><div style="left:35px;top:464px;width:1px;height:1px;background:#000;"></div><div style="left:31px;top:485px;width:1px;height:1px;background:#000;"></div><div style="left:33px;top:485px;width:1px;height:1px;background:#000;"></div><div style="left:35px;top:485px;width:1px;height:1px;background:#000;"></div><div style="left:30px;top:516px;width:1px;height:1px;background:#000;"></div><div style="left:30px;top:518px;width:1px;height:1px;background:#000;"></div><div style="left:30px;top:520px;width:1px;height:1px;background:#000;"></div><div style="left:30px;top:522px;width:1px;height:1px;background:#000;"></div><div style="left:30px;top:524px;width:1px;height:1px;background:#000;"></div><div style="left:30px;top:526px;width:1px;height:1px;background:#000;"></div><div style="left:30px;top:528px;width:1px;height:1px;background:#000;"></div><div style="left:30px;top:530px;width:1px;height:1px;background:#000;"></div><div style="left:30px;top:532px;width:1px;height:1px;background:#000;"></div><div style="left:30px;top:534px;width:1px;height:1px;background:#000;"></div><div style="left:30px;top:536px;width:1px;height:1px;background:#000;"></div><div style="left:30px;top:538px;width:1px;height:1px;background:#000;"></div><div style="left:30px;top:540px;width:1px;height:1px;background:#000;"></div><div style="left:30px;top:542px;width:1px;height:1px;background:#000;"></div><div style="left:30px;top:544px;width:1px;height:1px;background:#000;"></div><div style="left:30px;top:546px;width:1px;height:1px;background:#000;"></div><div style="left:30px;top:548px;width:1px;height:1px;background:#000;"></div><div style="left:30px;top:550px;width:1px;height:1px;background:#000;"></div><div style="left:30px;top:552px;width:1px;height:1px;background:#000;"></div><div style="left:30px;top:554px;width:1px;height:1px;background:#000;"></div><div style="left:30px;top:556px;width:1px;height:1px;background:#000;"></div><div style="left:30px;top:558px;width:1px;height:1px;background:#000;"></div><div style="left:30px;top:560px;width:1px;height:1px;background:#000;"></div><div style="left:30px;top:562px;width:1px;height:1px;background:#000;"></div><div style="left:30px;top:564px;width:1px;height:1px;background:#000;"></div><div style="left:30px;top:566px;width:1px;height:1px;background:#000;"></div><div style="left:30px;top:568px;width:1px;height:1px;background:#000;"></div><div style="left:30px;top:570px;width:1px;height:1px;background:#000;"></div><div style="left:30px;top:572px;width:1px;height:1px;background:#000;"></div><div style="left:31px;top:527px;width:1px;height:1px;background:#000;"></div><div style="left:33px;top:527px;width:1px;height:1px;background:#000;"></div><div style="left:35px;top:527px;width:1px;height:1px;background:#000;"></div><div style="left:31px;top:548px;width:1px;height:1px;background:#000;"></div><div style="left:33px;top:548px;width:1px;height:1px;background:#000;"></div><div style="left:35px;top:548px;width:1px;height:1px;background:#000;"></div><div style="left:31px;top:569px;width:1px;height:1px;background:#000;"></div><div style="left:33px;top:569px;width:1px;height:1px;background:#000;"></div><div style="left:35px;top:569px;width:1px;height:1px;background:#000;"></div><div style="left:48px;top:57.70px;font-size:12.5px;line-height:14px;color:#000;white-space:nowrap;letter-spacing:-0.15px;">Desktop</div><svg style="position:absolute;left:26px;top:60px;width:19px;height:15px;overflow:visible" viewBox="0 0 19 15"><defs><linearGradient id="dk" x1="0" y1="0" x2="1" y2="1"><stop offset="0" stop-color="#e8dcc0"/><stop offset="1" stop-color="#a09880"/></linearGradient></defs><rect x="1" y="0.5" width="17" height="11" rx="1" fill="url(#dk)"/><rect x="2.5" y="1" width="14" height="10" rx="4" fill="#4a3c6a"/><rect x="5" y="2" width="6" height="8" fill="#e8e8e8"/><rect x="6" y="3" width="3" height="3" fill="#909090"/><path d="M6.5 14 L14.5 6.5" stroke="#000" stroke-width="3.4"/><path d="M6.5 14 L14.5 6.5" stroke="#e89020" stroke-width="2.2"/></svg><div style="left:63px;top:78.70px;font-size:12.5px;line-height:14px;color:#d00000;white-space:nowrap;letter-spacing:0.1px;">Background</div><svg style="position:absolute;left:42px;top:79px;width:16px;height:14px;overflow:visible" viewBox="0 0 16 14"><defs><linearGradient id="bgg" x1="0" y1="0" x2="0" y2="1"><stop offset="0" stop-color="#283028"/><stop offset="1" stop-color="#d0f0d0"/></linearGradient></defs><rect x="0.5" y="0.5" width="14.5" height="10.5" rx="1" fill="#505450" stroke="#a0a4a0" stroke-width="0.6"/><rect x="2" y="2" width="11" height="7.5" fill="url(#bgg)"/><path d="M4.5 2v7.5M7.5 2v7.5M10.5 2v7.5" stroke="#202820" stroke-width="0.5" opacity="0.7"/><path d="M2 11.2 L14 11.2 L13 12.5 L3 12.5z" fill="#404440"/><rect x="5" y="12.5" width="6" height="1" fill="#303030"/></svg><div style="left:63px;top:99.70px;font-size:12.5px;line-height:14px;color:#000;white-space:nowrap;letter-spacing:0.2px;">Launch Feedback</div><svg style="position:absolute;left:43px;top:99px;width:15px;height:16px;overflow:visible" viewBox="0 0 15 16"><rect x="1" y="0.7" width="13" height="3" fill="#fff" stroke="#000" stroke-width="1.3"/><rect x="1" y="12.3" width="13" height="3" fill="#fff" stroke="#000" stroke-width="1.3"/><path d="M3.5 3.7 C3.5 6 5.8 7 5.8 8 C5.8 9 3.5 10 3.5 12.3 L11.5 12.3 C11.5 10 9.2 9 9.2 8 C9.2 7 11.5 6 11.5 3.7z" fill="#f0f0f0"/><path d="M3.5 3.7 C3.5 6 5.8 7 5.8 8 C5.8 9 3.5 10 3.5 12.3 M11.5 3.7 C11.5 6 9.2 7 9.2 8 C9.2 9 11.5 10 11.5 12.3" stroke="#000" stroke-width="1.3" fill="none"/><path d="M7.5 6 v1 M7.5 9 v1 M5.5 11 h1 M8.5 11 h1" stroke="#404040" stroke-width="1"/></svg><div style="left:63px;top:120.70px;font-size:12.5px;line-height:14px;color:#000;white-space:nowrap;letter-spacing:0px;">Panel</div><svg style="position:absolute;left:39px;top:119px;width:24px;height:22px;overflow:visible" viewBox="0 0 24 22"><rect x="1" y="4" width="19.5" height="6" fill="#8a9a90" stroke="#404840" stroke-width="0.8"/><rect x="3" y="6" width="1" height="2" fill="#202020"/><rect x="17.5" y="6" width="1" height="2" fill="#202020"/><path d="M10 5 L11 5.5 L10.5 9.5 L11.5 10 L11.5 14 L9 17 L4 18.5 L3 16 L4 12 L8 9 Z" fill="#d8b078" stroke="#705030" stroke-width="0.5"/><path d="M11.5 10 L11.5 14 L9 17 L8 15 L10 12z" fill="#404040" opacity="0.6"/></svg><div style="left:63px;top:141.70px;font-size:12.5px;line-height:14px;color:#000;white-space:nowrap;letter-spacing:0.2px;">Screensaver</div><svg style="position:absolute;left:42px;top:142px;width:15px;height:14px;overflow:visible" viewBox="0 0 15 14"><rect x="0.5" y="0.5" width="14" height="10" rx="1" fill="#282828" stroke="#606060" stroke-width="0.6"/><rect x="2" y="2" width="11" height="7" fill="#000"/><ellipse cx="7.5" cy="5.5" rx="3" ry="2.3" fill="none" stroke="#c0c0c0" stroke-width="0.8"/><rect x="3" y="11" width="9" height="2" fill="#404040"/></svg><div style="left:63px;top:162.70px;font-size:12.5px;line-height:14px;color:#d00000;white-space:nowrap;letter-spacing:0px;">Theme Selector</div><svg style="position:absolute;left:40px;top:162px;width:20px;height:16px;overflow:visible" viewBox="0 0 20 16"><path d="M1 4 L9 1 C11 5 11 10 8 13 C5 12 2 9 1 4z" fill="#f4f4f4" stroke="#303030" stroke-width="0.8"/><circle cx="4.5" cy="5.5" r="0.9" fill="#000"/><circle cx="7.5" cy="4.5" r="0.9" fill="#000"/><path d="M4 9 Q6.5 10 8 7.5" stroke="#000" stroke-width="0.8" fill="none"/><path d="M10 6 L19 9 C18 13 14 16 11 15 C9 12 9 9 10 6z" fill="#181818"/><circle cx="13" cy="10" r="0.9" fill="#ccc"/><circle cx="16" cy="11" r="0.9" fill="#ccc"/></svg><div style="left:63px;top:183.70px;font-size:12.5px;line-height:14px;color:#000;white-space:nowrap;letter-spacing:0.15px;">Window Manager</div><svg style="position:absolute;left:41px;top:185px;width:19px;height:13px;overflow:visible" viewBox="0 0 19 13"><rect x="5.5" y="3.5" width="12" height="9" fill="#888c88" stroke="#707470" stroke-width="0.8"/><rect x="6" y="4" width="11" height="1.2" fill="#308080"/><rect x="0.5" y="0.5" width="12" height="9" fill="#c4c8c4" stroke="#a0a4a0" stroke-width="0.8"/><rect x="1" y="1" width="11" height="1.5" fill="#308080"/></svg><div style="left:25px;top:204.70px;font-size:12.5px;line-height:14px;color:#000;white-space:nowrap;letter-spacing:0px;">Document Handlers</div><div style="left:40px;top:225.70px;font-size:12.5px;line-height:14px;color:#000;white-space:nowrap;letter-spacing:0px;">Default Editor</div><div style="left:63px;top:246.70px;font-size:12.5px;line-height:14px;color:#fff;white-space:nowrap;letter-spacing:0px;">File Types and Programs</div><svg style="position:absolute;left:39px;top:247px;width:21px;height:17px;overflow:visible" viewBox="0 0 21 17"><defs><linearGradient id="ftg" x1="0" y1="0" x2="1" y2="1"><stop offset="0" stop-color="#ffffff"/><stop offset="1" stop-color="#808480"/></linearGradient></defs><path d="M1.5 9 C2 5 5 3.5 8 4 L11 7 L10 12 C9 15.5 5 16.5 3 15.5 Z" fill="url(#ftg)" stroke="#e8e0b0" stroke-width="0.7"/><path d="M4 14 C6 14.5 8 14 9 12" stroke="#202020" stroke-width="1" fill="none"/><path d="M9 10 L15 5.5" stroke="#40b040" stroke-width="2.6"/><path d="M13 2.5 C14.5 0.5 18.5 0.5 20 2.5 L19.5 8 C18 11.5 15 12 13.5 10.5 Z" fill="url(#ftg)" stroke="#e8e0b0" stroke-width="0.7"/><path d="M16 2 C18 2.5 18.5 5 17 6" stroke="#404040" stroke-width="0.9" fill="none"/><circle cx="13.5" cy="9.5" r="0.8" fill="#fff"/></svg><div style="left:63px;top:267.70px;font-size:12.5px;line-height:14px;color:#000;white-space:nowrap;letter-spacing:0.25px;">HTML Viewer</div><svg style="position:absolute;left:45px;top:267px;width:11px;height:17px;overflow:visible" viewBox="0 0 11 17"><path d="M5 2.5 C7 1 9 2 9 4 C8.5 6 7 7 6.5 9 C6 11 5 12 4.5 13" stroke="#a08068" stroke-width="2.6" fill="none" stroke-linecap="round"/><path d="M3.5 3 L6 2 M7.5 1 L10 3.5 M8 6 L10.5 7" stroke="#c8b088" stroke-width="1"/><path d="M5 9 C4 11 3.5 12 3.5 14.5" stroke="#903830" stroke-width="2.4" fill="none" stroke-linecap="round"/><circle cx="3.5" cy="15.2" r="1.5" fill="#802828"/></svg><div style="left:63px;top:288.70px;font-size:12.5px;line-height:14px;color:#000;white-space:nowrap;letter-spacing:-0.09px;">URL Handlers</div><svg style="position:absolute;left:42px;top:288px;width:18px;height:17px;overflow:visible" viewBox="0 0 18 17"><defs><radialGradient id="urlg" cx="0.35" cy="0.3" r="0.8"><stop offset="0" stop-color="#5890d0"/><stop offset="1" stop-color="#102858"/></radialGradient></defs><circle cx="7" cy="8" r="6.8" fill="url(#urlg)"/><path d="M3 4 C5 2.5 9 3 10.5 5 C11.5 7.5 9.5 9 8.5 13 C7 12.5 6 10 5.5 8.5 C4 8 3 7 3 4z" fill="#d8d088"/><path d="M10 2 C12 3 13 4 13.5 6" stroke="#c8c078" stroke-width="1.4"/><rect x="9.5" y="7.5" width="7" height="9" fill="#d8dcd8" stroke="#202020" stroke-width="0.9"/><path d="M11 9 h4" stroke="#fff" stroke-width="0.8"/></svg><div style="left:48px;top:309.70px;font-size:12.5px;line-height:14px;color:#000;white-space:nowrap;letter-spacing:0.2px;">Look and Feel</div><svg style="position:absolute;left:24px;top:308px;width:24px;height:22px;overflow:visible" viewBox="0 0 24 22"><rect x="2" y="4" width="18.5" height="6.3" fill="#505450"/><rect x="3" y="5" width="3" height="4.3" fill="#8c908c"/><rect x="6.5" y="5" width="4" height="4.3" fill="#b8bcb8"/><rect x="11" y="5" width="4.5" height="4.3" fill="#c8ccc8"/><rect x="16" y="5" width="3.5" height="4.3" fill="#8c908c"/><path d="M10 5 L11 5.5 L10.5 9.5 L11.5 10 L11.5 14 L9 17 L4 18.5 L3 16 L4 12 L8 9 Z" fill="#d8b078" stroke="#705030" stroke-width="0.5"/><path d="M11.5 10 L11.5 14 L9 17 L8 15 L10 12z" fill="#404040" opacity="0.6"/></svg><div style="left:63px;top:330.70px;font-size:12.5px;line-height:14px;color:#000;white-space:nowrap;letter-spacing:0.22px;">Applications</div><svg style="position:absolute;left:41px;top:332px;width:17px;height:14px;overflow:visible" viewBox="0 0 17 14"><rect x="6" y="0.5" width="7" height="5" fill="#f0f0f0" stroke="#a0a0a0" stroke-width="0.6"/><path d="M1 9 C1 6 4 4 9 4 C13 4 16 6 16 9 L16 12 L1 12z" fill="#5870a0"/><rect x="3.5" y="6.5" width="10" height="3.5" fill="#c8c890"/><path d="M3 12 L15 12 L16 13 L1 13z" fill="#202840"/></svg><div style="left:63px;top:351.70px;font-size:12.5px;line-height:14px;color:#000;white-space:nowrap;letter-spacing:0px;">Dialogs</div><svg style="position:absolute;left:43px;top:352px;width:15px;height:15px;overflow:visible" viewBox="0 0 15 15"><rect x="0.5" y="0.5" width="13" height="13" fill="#c8c8c8" stroke="#808080" stroke-width="0.8"/><rect x="1" y="0.5" width="12" height="1.2" fill="#208080"/><path d="M3 3 v4 M6 3 v3 M9 3 v4 M11 4 v2" stroke="#303030" stroke-width="1.2"/><rect x="4" y="9" width="6" height="4" fill="#505050"/></svg><div style="left:63px;top:372.70px;font-size:12.5px;line-height:14px;color:#000;white-space:nowrap;letter-spacing:0.5px;">MDI</div><svg style="position:absolute;left:40px;top:370px;width:20px;height:20px;overflow:visible" viewBox="0 0 20 20"><rect x="0.5" y="0.5" width="19" height="19" fill="#a0a4a0" stroke="#606460"/><rect x="2" y="2" width="16" height="16" fill="none" stroke="#d0d4d0" stroke-width="0.8"/><rect x="4.5" y="6.5" width="12" height="10" fill="#707470"/><rect x="3" y="4" width="11" height="9" fill="#fff" stroke="#505050" stroke-width="0.8"/></svg><div style="left:48px;top:393.70px;font-size:12.5px;line-height:14px;color:#000;white-space:nowrap;letter-spacing:0px;">Multimedia</div><svg style="position:absolute;left:27px;top:391px;width:17px;height:19px;overflow:visible" viewBox="0 0 17 19"><path d="M2 1 L10 9 M15 2 L8 10" stroke="#c0a060" stroke-width="1.5"/><path d="M1.5 8 L1.5 14 C1.5 17 14.5 17 14.5 14 L14.5 8z" fill="#c02020" stroke="#400000" stroke-width="0.8"/><ellipse cx="8" cy="8" rx="6.5" ry="2.5" fill="#f0f0f0" stroke="#404040" stroke-width="0.8"/><path d="M3 11 L8 15 L13 11" stroke="#f08080" stroke-width="0.8" fill="none"/></svg><div style="left:63px;top:414.70px;font-size:12.5px;line-height:14px;color:#000;white-space:nowrap;letter-spacing:0px;">Sound</div><svg style="position:absolute;left:40px;top:414px;width:19px;height:18px;overflow:visible" viewBox="0 0 19 18"><path d="M5 3 L14 1 L18 3 L14 16 L6 15z" fill="#d8b0b0" stroke="#806060" stroke-width="0.6"/><circle cx="10" cy="10" r="3.4" fill="#606850" stroke="#303030" stroke-width="0.6"/><path d="M1 8 L3 6 M2 13 L4 15 M15 14 L17 16" stroke="#404040" stroke-width="0.8"/></svg><div style="left:48px;top:435.70px;font-size:12.5px;line-height:14px;color:#000;white-space:nowrap;letter-spacing:0px;">Peripherals</div><svg style="position:absolute;left:25px;top:434px;width:20px;height:18px;overflow:visible" viewBox="0 0 20 18"><path d="M1 7 L12 1 L19 6 L8 12z" fill="#808080" stroke="#505050" stroke-width="0.6"/><path d="M1 7 L8 12 L8 14 L1 9z" fill="#606060"/><path d="M8 12 L19 6 L19 8 L8 14z" fill="#505050"/><path d="M10 13 v4 M12.5 12 v4 M15 10.5 v4 M17.5 9 v4" stroke="#c07040" stroke-width="1.2"/></svg><div style="left:63px;top:456.70px;font-size:12.5px;line-height:14px;color:#000;white-space:nowrap;letter-spacing:0.14px;">Keyboard</div><svg style="position:absolute;left:40px;top:457px;width:21px;height:15px;overflow:visible" viewBox="0 0 21 15"><path d="M3 2 L9 0.5 L12 3 L11 9 L5 11 L1 8z" fill="#d8d8d8" stroke="#404040" stroke-width="0.7"/><path d="M12 6 L18 4.5 L20 7 L19 12 L13 13.5 L11 11z" fill="#c8c8c8" stroke="#404040" stroke-width="0.7"/><path d="M2 9 L7 7.5 L10 10 L9 13.5 L3 14 L0.5 12z" fill="#e0e0e0" stroke="#404040" stroke-width="0.7"/></svg><div style="left:63px;top:477.70px;font-size:12.5px;line-height:14px;color:#000;white-space:nowrap;letter-spacing:0.3px;">Mouse</div><svg style="position:absolute;left:41px;top:478px;width:18px;height:14px;overflow:visible" viewBox="0 0 18 14"><path d="M10 5 C12 1 17 1 17 3 C17 5 13 6 11 6" stroke="#808080" stroke-width="0.8" fill="none"/><ellipse cx="7.5" cy="8.5" rx="7" ry="4.5" transform="rotate(-20 7.5 8.5)" fill="#c8ccc8" stroke="#707070" stroke-width="0.6"/><ellipse cx="6" cy="7" rx="3" ry="1.8" transform="rotate(-20 6 7)" fill="#f0f0f0"/></svg><div style="left:48px;top:498.70px;font-size:12.5px;line-height:14px;color:#000;white-space:nowrap;letter-spacing:0px;">Sawfish window manager</div><svg style="position:absolute;left:26px;top:500px;width:19px;height:13px;overflow:visible" viewBox="0 0 19 13"><rect x="5.5" y="3.5" width="12" height="9" fill="#888c88" stroke="#707470" stroke-width="0.8"/><rect x="6" y="4" width="11" height="1.2" fill="#308080"/><rect x="0.5" y="0.5" width="12" height="9" fill="#c4c8c4" stroke="#a0a4a0" stroke-width="0.8"/><rect x="1" y="1" width="11" height="1.5" fill="#308080"/></svg><div style="left:63px;top:519.70px;font-size:12.5px;line-height:14px;color:#000;white-space:nowrap;letter-spacing:0.22px;">Appearance</div><svg style="position:absolute;left:41px;top:520px;width:17px;height:13px;overflow:visible" viewBox="0 0 17 13"><path d="M0.5 6.5 C4 1 13 1 16.5 6.5 C13 12 4 12 0.5 6.5z" fill="#f0f0f0" stroke="#101010" stroke-width="1.4"/><circle cx="8" cy="6.5" r="3.6" fill="#306870"/><circle cx="8" cy="6.5" r="1.8" fill="#000"/><circle cx="6.8" cy="5.3" r="0.8" fill="#fff"/><path d="M3 1 L5 2.5 M8 0 L8 2 M13 1 L11 2.5" stroke="#303030" stroke-width="0.6"/></svg><div style="left:63px;top:540.70px;font-size:12.5px;line-height:14px;color:#000;white-space:nowrap;letter-spacing:0.23px;">Focus behavior</div><svg style="position:absolute;left:40px;top:538px;width:19px;height:19px;overflow:visible" viewBox="0 0 19 19"><rect x="0.5" y="7.5" width="10" height="10" fill="#888c88" stroke="#303030" stroke-width="0.8"/><rect x="6.5" y="0.5" width="12" height="11" fill="#b8bcb8" stroke="#303030" stroke-width="0.8"/><path d="M8 2 L15 9 L12 9.5 L14 14 L12.5 14.5 L10.5 10 L8 12z" fill="#fff" stroke="#000" stroke-width="0.8"/></svg><div style="left:63px;top:561.70px;font-size:12.5px;line-height:14px;color:#000;white-space:nowrap;letter-spacing:0.1px;">Matched Windows</div><svg style="position:absolute;left:40px;top:560px;width:18px;height:18px;overflow:visible" viewBox="0 0 18 18"><circle cx="8.5" cy="8.5" r="7" fill="#f0f0f0" stroke="#c07820" stroke-width="2"/><path d="M8.5 1 v3 M8.5 13 v3 M1 8.5 h3 M13 8.5 h3" stroke="#c07820" stroke-width="2"/><rect x="14" y="10" width="3" height="7" fill="#303030"/></svg></div></div>
<div style="left:211px;top:53px;width:13px;height:522px;background:#c0c0c0;"></div>
<div style="left:211px;top:53px;width:13px;height:1px;background:#000000;"></div>
<div style="left:211px;top:53px;width:1px;height:521px;background:#000000;"></div>
<div style="left:211px;top:574px;width:14px;height:1px;background:#ffffff;"></div>
<div style="left:223px;top:53px;width:1px;height:522px;background:#ffffff;"></div>
<div style="left:224px;top:52px;width:1px;height:523px;background:#e8ece8;"></div>
<svg style="left:212px;top:54px;width:11px;height:12px;" viewBox="0 0 11 12"><polygon points="5.5,1 10,10.5 1,10.5" fill="#d0d4d0"/><path d="M5.5 1 L1 10.5" stroke="#fff" stroke-width="1"/><path d="M5.5 1 L10 10.5" stroke="#000" stroke-width="1.1"/><rect x="2" y="10" width="7" height="1" fill="#000"/></svg>
<div style="left:212px;top:66px;width:11px;height:339px;background:#d0d4d0;"></div>
<div style="left:212px;top:66px;width:10px;height:1px;background:#ffffff;"></div>
<div style="left:212px;top:66px;width:1px;height:338px;background:#ffffff;"></div>
<div style="left:222px;top:66px;width:1px;height:339px;background:#000000;"></div>
<div style="left:212px;top:404px;width:11px;height:1px;background:#000000;"></div>
<div style="left:221px;top:67px;width:1px;height:337px;background:#949894;"></div>
<svg style="left:212px;top:561px;width:11px;height:12px;" viewBox="0 0 11 12"><polygon points="1,1 10,1 5.5,11" fill="#d0d4d0"/><path d="M1 1 L5.5 11" stroke="#fff" stroke-width="1"/><path d="M10 1 L5.5 11" stroke="#000" stroke-width="1.1"/></svg>
<div style="left:6px;top:579px;width:201px;height:13px;background:#c0c0c0;"></div>
<div style="left:6px;top:579px;width:200px;height:1px;background:#000000;"></div>
<div style="left:6px;top:579px;width:1px;height:12px;background:#000000;"></div>
<div style="left:6px;top:591px;width:201px;height:1px;background:#ffffff;"></div>
<div style="left:206px;top:579px;width:1px;height:13px;background:#ffffff;"></div>
<svg style="left:7px;top:580px;width:12px;height:11px;" viewBox="0 0 12 11"><polygon points="1,5.5 11,1 11,10" fill="#d0d4d0"/><path d="M11 1 L1 5.5" stroke="#fff" stroke-width="1"/><path d="M1 5.5 L11 10" stroke="#000" stroke-width="1.2"/><rect x="10" y="1" width="1" height="9" fill="#000"/></svg>
<div style="left:19px;top:580px;width:136px;height:11px;background:#d0d4d0;"></div>
<div style="left:19px;top:580px;width:136px;height:1px;background:#ffffff;"></div>
<div style="left:19px;top:580px;width:1px;height:11px;background:#ffffff;"></div>
<div style="left:19px;top:590px;width:136px;height:1px;background:#000000;"></div>
<div style="left:154px;top:580px;width:1px;height:11px;background:#000000;"></div>
<div style="left:20px;top:589px;width:134px;height:1px;background:#949894;"></div>
<div style="left:153px;top:581px;width:1px;height:9px;background:#949894;"></div>
<svg style="left:194px;top:580px;width:12px;height:11px;" viewBox="0 0 12 11"><polygon points="1,1 11,5.5 1,10" fill="#d0d4d0"/><path d="M1 1 L11 5.5" stroke="#fff" stroke-width="1"/><path d="M11 5.5 L1 10" stroke="#000" stroke-width="1.2"/></svg>
<div style="left:229px;top:52px;width:1px;height:541px;background:#949894;"></div>
<div style="left:230px;top:52px;width:1px;height:541px;background:#ffffff;"></div>
<div style="left:225px;top:573px;width:10px;height:10px;background:#d0d4d0;"></div>
<div style="left:225px;top:573px;width:9px;height:1px;background:#ffffff;"></div>
<div style="left:225px;top:573px;width:1px;height:9px;background:#ffffff;"></div>
<div style="left:234px;top:573px;width:1px;height:10px;background:#000000;"></div>
<div style="left:225px;top:582px;width:10px;height:1px;background:#000000;"></div>
<div style="left:5px;top:594px;width:788px;height:1px;background:#000000;"></div>
<div style="left:5px;top:594px;width:1px;height:19px;background:#949894;"></div>
<div style="left:6px;top:595px;width:1px;height:17px;background:#000000;"></div>
<div style="left:5px;top:612px;width:788px;height:1px;background:#ffffff;"></div>
<div style="left:792px;top:594px;width:1px;height:19px;background:#ffffff;"></div>
<div style="left:7px;top:596.00px;font-size:12.5px;line-height:14px;color:#000;white-space:nowrap;font-family:'Liberation Sans', sans-serif;letter-spacing:0.13px;">Specify which programs are used to open or view each file type</div>
<div style="left:247px;top:64px;width:507px;height:1px;background:#949894;"></div>
<div style="left:247px;top:64px;width:1px;height:265px;background:#949894;"></div>
<div style="left:248px;top:65px;width:505px;height:1px;background:#000000;"></div>
<div style="left:248px;top:65px;width:1px;height:263px;background:#000000;"></div>
<div style="left:249px;top:66px;width:504px;height:261px;background:#f8fcf8;"></div>
<div style="left:247px;top:328px;width:507px;height:1px;background:#ffffff;"></div>
<div style="left:753px;top:64px;width:1px;height:265px;background:#ffffff;"></div>
<div style="left:249px;top:327px;width:504px;height:1px;background:#e8ece8;"></div>
<div style="left:249px;top:66px;width:116px;height:21px;background:#d0d4d0;"></div>
<div style="left:249px;top:66px;width:116px;height:1px;background:#ffffff;"></div>
<div style="left:249px;top:66px;width:1px;height:21px;background:#ffffff;"></div>
<div style="left:363px;top:67px;width:1px;height:19px;background:#949894;"></div>
<div style="left:364px;top:66px;width:1px;height:21px;background:#000000;"></div>
<div style="left:249px;top:86px;width:116px;height:1px;background:#000000;"></div>
<div style="left:252px;top:70.00px;font-size:12.5px;line-height:14px;color:#000;white-space:nowrap;font-family:'Liberation Sans', sans-serif;letter-spacing:0.15px;">Description</div>
<div style="left:365px;top:66px;width:115px;height:21px;background:#d0d4d0;"></div>
<div style="left:365px;top:66px;width:115px;height:1px;background:#ffffff;"></div>
<div style="left:365px;top:66px;width:1px;height:21px;background:#ffffff;"></div>
<div style="left:478px;top:67px;width:1px;height:19px;background:#949894;"></div>
<div style="left:479px;top:66px;width:1px;height:21px;background:#000000;"></div>
<div style="left:365px;top:86px;width:115px;height:1px;background:#000000;"></div>
<div style="left:368px;top:70.00px;font-size:12.5px;line-height:14px;color:#000;white-space:nowrap;font-family:'Liberation Sans', sans-serif;letter-spacing:0.25px;">MIME Type</div>
<div style="left:480px;top:66px;width:116px;height:21px;background:#d0d4d0;"></div>
<div style="left:480px;top:66px;width:116px;height:1px;background:#ffffff;"></div>
<div style="left:480px;top:66px;width:1px;height:21px;background:#ffffff;"></div>
<div style="left:594px;top:67px;width:1px;height:19px;background:#949894;"></div>
<div style="left:595px;top:66px;width:1px;height:21px;background:#000000;"></div>
<div style="left:480px;top:86px;width:116px;height:1px;background:#000000;"></div>
<div style="left:484px;top:70.00px;font-size:12.5px;line-height:14px;color:#000;white-space:nowrap;font-family:'Liberation Sans', sans-serif;letter-spacing:-0.05px;">Extension</div>
<div style="left:596px;top:66px;width:157px;height:21px;background:#d0d4d0;"></div>
<div style="left:596px;top:66px;width:157px;height:1px;background:#ffffff;"></div>
<div style="left:596px;top:66px;width:1px;height:21px;background:#ffffff;"></div>
<div style="left:751px;top:67px;width:1px;height:19px;background:#949894;"></div>
<div style="left:752px;top:66px;width:1px;height:21px;background:#000000;"></div>
<div style="left:596px;top:86px;width:157px;height:1px;background:#000000;"></div>
<div style="left:600px;top:70.00px;font-size:12.5px;line-height:14px;color:#000;white-space:nowrap;font-family:'Liberation Sans', sans-serif;letter-spacing:0.2px;">Default Action</div>
<div style="left:249px;top:87px;width:504px;height:240px;overflow:hidden;position:absolute;"><div style="left:-249px;top:-87px;width:799px;height:619px;position:absolute;"><div style="left:253px;top:84px;width:15px;height:18px;box-sizing:border-box;background:linear-gradient(135deg,#e8ece8,#ffffff 50%,#d8dcd8);border-right:1px solid #909490;border-bottom:1px solid #909490;border-left:1px solid #e0e4e0;border-top:1px solid #f0f0f0;"></div><div style="left:369px;top:84px;width:109px;height:20px;overflow:hidden;"><div style="left:0;top:3.20px;font-size:12.5px;line-height:14px;color:#000;white-space:nowrap;letter-spacing:0.15px;">x–device/floppy</div></div><div style="left:601px;top:84px;width:151px;height:20px;overflow:hidden;"><div style="left:0;top:3.20px;font-size:12.5px;line-height:14px;color:#000;white-space:nowrap;letter-spacing:0px;">none</div></div><div style="left:253px;top:104px;width:15px;height:18px;box-sizing:border-box;background:linear-gradient(135deg,#e8ece8,#ffffff 50%,#d8dcd8);border-right:1px solid #909490;border-bottom:1px solid #909490;border-left:1px solid #e0e4e0;border-top:1px solid #f0f0f0;"></div><div style="left:369px;top:104px;width:109px;height:20px;overflow:hidden;"><div style="left:0;top:3.20px;font-size:12.5px;line-height:14px;color:#000;white-space:nowrap;letter-spacing:0.15px;">application/x–gnomecard</div></div><div style="left:485px;top:104px;width:109px;height:20px;overflow:hidden;"><div style="left:0;top:3.20px;font-size:12.5px;line-height:14px;color:#000;white-space:nowrap;letter-spacing:0px;">.caves</div></div><div style="left:601px;top:104px;width:151px;height:20px;overflow:hidden;"><div style="left:0;top:3.20px;font-size:12.5px;line-height:14px;color:#000;white-space:nowrap;letter-spacing:0px;">none</div></div><div style="left:253px;top:124px;width:15px;height:18px;box-sizing:border-box;background:linear-gradient(135deg,#e8ece8,#ffffff 50%,#d8dcd8);border-right:1px solid #909490;border-bottom:1px solid #909490;border-left:1px solid #e0e4e0;border-top:1px solid #f0f0f0;"></div><div style="left:273px;top:124px;width:89px;height:20px;overflow:hidden;"><div style="left:0;top:3.20px;font-size:12.5px;line-height:14px;color:#000;white-space:nowrap;letter-spacing:0.1px;">3D Studio image</div></div><div style="left:369px;top:124px;width:109px;height:20px;overflow:hidden;"><div style="left:0;top:3.20px;font-size:12.5px;line-height:14px;color:#000;white-space:nowrap;letter-spacing:0.15px;">image/x–3ds</div></div><div style="left:485px;top:124px;width:109px;height:20px;overflow:hidden;"><div style="left:0;top:3.20px;font-size:12.5px;line-height:14px;color:#000;white-space:nowrap;letter-spacing:0px;">.3ds</div></div><div style="left:601px;top:124px;width:151px;height:20px;overflow:hidden;"><div style="left:0;top:3.20px;font-size:12.5px;line-height:14px;color:#000;white-space:nowrap;letter-spacing:0px;">none</div></div><div style="left:253px;top:144px;width:15px;height:18px;box-sizing:border-box;background:linear-gradient(135deg,#e8ece8,#ffffff 50%,#d8dcd8);border-right:1px solid #909490;border-bottom:1px solid #909490;border-left:1px solid #e0e4e0;border-top:1px solid #f0f0f0;"></div><div style="left:273px;top:144px;width:89px;height:20px;overflow:hidden;"><div style="left:0;top:3.20px;font-size:12.5px;line-height:14px;color:#000;white-space:nowrap;letter-spacing:0.1px;">AbiWord document</div></div><div style="left:369px;top:144px;width:109px;height:20px;overflow:hidden;"><div style="left:0;top:3.20px;font-size:12.5px;line-height:14px;color:#000;white-space:nowrap;letter-spacing:0.15px;">text/abiword</div></div><div style="left:485px;top:144px;width:109px;height:20px;overflow:hidden;"><div style="left:0;top:3.20px;font-size:12.5px;line-height:14px;color:#000;white-space:nowrap;letter-spacing:0px;">.abw</div></div><svg style="position:absolute;left:601px;top:144px;width:15px;height:18px;overflow:visible" viewBox="0 0 15 18"><rect x="0.5" y="0.5" width="14" height="17" fill="#e8ece8" stroke="#c0c4c0"/><circle cx="5.5" cy="5.5" r="3.2" fill="#dce0dc" stroke="#707470" stroke-width="1" stroke-dasharray="1 0.5"/><circle cx="9.5" cy="9.8" r="3.2" fill="#d0d8d8" stroke="#606460" stroke-width="1" stroke-dasharray="1 0.5"/><circle cx="6.5" cy="13.8" r="2.8" fill="#dce0dc" stroke="#707470" stroke-width="1" stroke-dasharray="1 0.5"/></svg><div style="left:621px;top:144px;width:131px;height:20px;overflow:hidden;"><div style="left:0;top:3.20px;font-size:12.5px;line-height:14px;color:#000;white-space:nowrap;letter-spacing:0px;">AbiWord</div></div><div style="left:253px;top:164px;width:15px;height:18px;box-sizing:border-box;background:linear-gradient(135deg,#e8ece8,#ffffff 50%,#d8dcd8);border-right:1px solid #909490;border-bottom:1px solid #909490;border-left:1px solid #e0e4e0;border-top:1px solid #f0f0f0;"></div><div style="left:273px;top:164px;width:89px;height:20px;overflow:hidden;"><div style="left:0;top:3.20px;font-size:12.5px;line-height:14px;color:#000;white-space:nowrap;letter-spacing:0.1px;">active server page</div></div><div style="left:369px;top:164px;width:109px;height:20px;overflow:hidden;"><div style="left:0;top:3.20px;font-size:12.5px;line-height:14px;color:#000;white-space:nowrap;letter-spacing:0.15px;">application/x–asp</div></div><div style="left:485px;top:164px;width:109px;height:20px;overflow:hidden;"><div style="left:0;top:3.20px;font-size:12.5px;line-height:14px;color:#000;white-space:nowrap;letter-spacing:0px;">.asp</div></div><div style="left:601px;top:164px;width:151px;height:20px;overflow:hidden;"><div style="left:0;top:3.20px;font-size:12.5px;line-height:14px;color:#000;white-space:nowrap;letter-spacing:0px;">none</div></div><div style="left:253px;top:184px;width:15px;height:18px;box-sizing:border-box;background:linear-gradient(135deg,#e8ece8,#ffffff 50%,#d8dcd8);border-right:1px solid #909490;border-bottom:1px solid #909490;border-left:1px solid #e0e4e0;border-top:1px solid #f0f0f0;"></div><div style="left:273px;top:184px;width:89px;height:20px;overflow:hidden;"><div style="left:0;top:3.20px;font-size:12.5px;line-height:14px;color:#000;white-space:nowrap;letter-spacing:0.1px;">address card</div></div><div style="left:369px;top:184px;width:109px;height:20px;overflow:hidden;"><div style="left:0;top:3.20px;font-size:12.5px;line-height:14px;color:#000;white-space:nowrap;letter-spacing:0.15px;">text/x–vcard</div></div><div style="left:485px;top:184px;width:109px;height:20px;overflow:hidden;"><div style="left:0;top:3.20px;font-size:12.5px;line-height:14px;color:#000;white-space:nowrap;letter-spacing:0px;">.gcrd</div></div><svg style="position:absolute;left:601px;top:184px;width:15px;height:18px;overflow:visible" viewBox="0 0 15 18"><rect x="0.5" y="0.5" width="14" height="17" fill="#e8ece8" stroke="#c0c4c0"/><circle cx="5.5" cy="5.5" r="3.2" fill="#dce0dc" stroke="#707470" stroke-width="1" stroke-dasharray="1 0.5"/><circle cx="9.5" cy="9.8" r="3.2" fill="#d0d8d8" stroke="#606460" stroke-width="1" stroke-dasharray="1 0.5"/><circle cx="6.5" cy="13.8" r="2.8" fill="#dce0dc" stroke="#707470" stroke-width="1" stroke-dasharray="1 0.5"/></svg><div style="left:621px;top:184px;width:131px;height:20px;overflow:hidden;"><div style="left:0;top:3.20px;font-size:12.5px;line-height:14px;color:#000;white-space:nowrap;letter-spacing:0px;">GnomeCard</div></div><div style="left:249px;top:204px;width:504px;height:19px;background:#000090;"></div><svg style="position:absolute;left:255px;top:206px;width:14px;height:14px;overflow:visible" viewBox="0 0 14 14"><path d="M2 4 L8 1 L13 9 L6 13 L3 12 Z" fill="#c8ccc8" stroke="#202020" stroke-width="0.7"/><path d="M5 5 L8 3 L10 8 L7 10z" fill="#8090c0"/><rect x="1" y="8.5" width="5" height="3" fill="#000"/><path d="M2 9.5 h3" stroke="#fff" stroke-width="0.7"/></svg><div style="left:276px;top:204px;width:86px;height:20px;overflow:hidden;"><div style="left:0;top:3.20px;font-size:12.5px;line-height:14px;color:#fff;white-space:nowrap;letter-spacing:0.1px;">Adobe font metrics</div></div><div style="left:369px;top:204px;width:109px;height:20px;overflow:hidden;"><div style="left:0;top:3.20px;font-size:12.5px;line-height:14px;color:#fff;white-space:nowrap;letter-spacing:0.15px;">application/x–font–afm</div></div><div style="left:485px;top:204px;width:109px;height:20px;overflow:hidden;"><div style="left:0;top:3.20px;font-size:12.5px;line-height:14px;color:#fff;white-space:nowrap;letter-spacing:0px;">.afm</div></div><div style="left:601px;top:204px;width:151px;height:20px;overflow:hidden;"><div style="left:0;top:3.20px;font-size:12.5px;line-height:14px;color:#fff;white-space:nowrap;letter-spacing:0px;">none</div></div><svg style="position:absolute;left:255px;top:226px;width:14px;height:14px;overflow:visible" viewBox="0 0 14 14"><path d="M2 4 L8 1 L13 9 L6 13 L3 12 Z" fill="#c8ccc8" stroke="#202020" stroke-width="0.7"/><path d="M5 5 L8 3 L10 8 L7 10z" fill="#6080e0"/><rect x="1" y="8.5" width="5" height="3" fill="#000"/><path d="M2 9.5 h3" stroke="#fff" stroke-width="0.7"/></svg><div style="left:276px;top:224px;width:86px;height:20px;overflow:hidden;"><div style="left:0;top:3.20px;font-size:12.5px;line-height:14px;color:#000;white-space:nowrap;letter-spacing:0.1px;">AIFF audio</div></div><div style="left:369px;top:224px;width:109px;height:20px;overflow:hidden;"><div style="left:0;top:3.20px;font-size:12.5px;line-height:14px;color:#000;white-space:nowrap;letter-spacing:0.15px;">audio/x–aiff</div></div><div style="left:485px;top:224px;width:109px;height:20px;overflow:hidden;"><div style="left:0;top:3.20px;font-size:12.5px;line-height:14px;color:#000;white-space:nowrap;letter-spacing:0px;">.aif, .aifc, .aiff</div></div><svg style="position:absolute;left:601px;top:224px;width:15px;height:18px;overflow:visible" viewBox="0 0 15 18"><rect x="0.5" y="0.5" width="14" height="17" fill="#e8ece8" stroke="#c0c4c0"/><circle cx="5.5" cy="5.5" r="3.2" fill="#dce0dc" stroke="#707470" stroke-width="1" stroke-dasharray="1 0.5"/><circle cx="9.5" cy="9.8" r="3.2" fill="#d0d8d8" stroke="#606460" stroke-width="1" stroke-dasharray="1 0.5"/><circle cx="6.5" cy="13.8" r="2.8" fill="#dce0dc" stroke="#707470" stroke-width="1" stroke-dasharray="1 0.5"/></svg><div style="left:621px;top:224px;width:131px;height:20px;overflow:hidden;"><div style="left:0;top:3.20px;font-size:12.5px;line-height:14px;color:#000;white-space:nowrap;letter-spacing:0px;">Sound Recorder</div></div><div style="left:253px;top:244px;width:15px;height:18px;box-sizing:border-box;background:linear-gradient(135deg,#e8ece8,#ffffff 50%,#d8dcd8);border-right:1px solid #909490;border-bottom:1px solid #909490;border-left:1px solid #e0e4e0;border-top:1px solid #f0f0f0;"></div><div style="left:273px;top:244px;width:89px;height:20px;overflow:hidden;"><div style="left:0;top:3.20px;font-size:12.5px;line-height:14px;color:#000;white-space:nowrap;letter-spacing:0.1px;">Andrew Toolkit inset</div></div><div style="left:369px;top:244px;width:109px;height:20px;overflow:hidden;"><div style="left:0;top:3.20px;font-size:12.5px;line-height:14px;color:#000;white-space:nowrap;letter-spacing:0.15px;">application/andrew–inset</div></div><div style="left:485px;top:244px;width:109px;height:20px;overflow:hidden;"><div style="left:0;top:3.20px;font-size:12.5px;line-height:14px;color:#000;white-space:nowrap;letter-spacing:0px;">.ez</div></div><div style="left:601px;top:244px;width:151px;height:20px;overflow:hidden;"><div style="left:0;top:3.20px;font-size:12.5px;line-height:14px;color:#000;white-space:nowrap;letter-spacing:0px;">none</div></div><div style="left:253px;top:264px;width:15px;height:18px;box-sizing:border-box;background:linear-gradient(135deg,#e8ece8,#ffffff 50%,#d8dcd8);border-right:1px solid #909490;border-bottom:1px solid #909490;border-left:1px solid #e0e4e0;border-top:1px solid #f0f0f0;"></div><div style="left:273px;top:264px;width:89px;height:20px;overflow:hidden;"><div style="left:0;top:3.20px;font-size:12.5px;line-height:14px;color:#000;white-space:nowrap;letter-spacing:0.1px;">ANIM animation</div></div><div style="left:369px;top:264px;width:109px;height:20px;overflow:hidden;"><div style="left:0;top:3.20px;font-size:12.5px;line-height:14px;color:#000;white-space:nowrap;letter-spacing:0.15px;">video/x–anim</div></div><div style="left:601px;top:264px;width:151px;height:20px;overflow:hidden;"><div style="left:0;top:3.20px;font-size:12.5px;line-height:14px;color:#000;white-space:nowrap;letter-spacing:0px;">none</div></div><div style="left:253px;top:284px;width:15px;height:18px;box-sizing:border-box;background:linear-gradient(135deg,#e8ece8,#ffffff 50%,#d8dcd8);border-right:1px solid #909490;border-bottom:1px solid #909490;border-left:1px solid #e0e4e0;border-top:1px solid #f0f0f0;"></div><div style="left:273px;top:284px;width:89px;height:20px;overflow:hidden;"><div style="left:0;top:3.20px;font-size:12.5px;line-height:14px;color:#000;white-space:nowrap;letter-spacing:0.1px;">ApplixWare Graphics</div></div><div style="left:369px;top:284px;width:109px;height:20px;overflow:hidden;"><div style="left:0;top:3.20px;font-size:12.5px;line-height:14px;color:#000;white-space:nowrap;letter-spacing:0.15px;">image/x–applix–graphics</div></div><div style="left:485px;top:284px;width:109px;height:20px;overflow:hidden;"><div style="left:0;top:3.20px;font-size:12.5px;line-height:14px;color:#000;white-space:nowrap;letter-spacing:0px;">.ag</div></div><div style="left:601px;top:284px;width:151px;height:20px;overflow:hidden;"><div style="left:0;top:3.20px;font-size:12.5px;line-height:14px;color:#000;white-space:nowrap;letter-spacing:0px;">none</div></div><svg style="position:absolute;left:253px;top:306px;width:19px;height:16px;overflow:visible" viewBox="0 0 19 16"><rect x="0" y="0" width="17" height="14" fill="#e4ece4"/><path d="M0 3.5 h17 M0 6.5 h17 M0 9.5 h17 M7 0 v14 M11 0 v14" stroke="#f8fcf8" stroke-width="0.8"/><path d="M4.5 0 v14" stroke="#f0c8a0" stroke-width="0.8"/><path d="M17.5 0 v14.5 M0 14.5 h18" stroke="#606460" stroke-width="1"/></svg><div style="left:276px;top:304px;width:86px;height:20px;overflow:hidden;"><div style="left:0;top:3.20px;font-size:12.5px;line-height:14px;color:#000;white-space:nowrap;letter-spacing:0.1px;">Applixware spreadsheet</div></div><div style="left:369px;top:304px;width:109px;height:20px;overflow:hidden;"><div style="left:0;top:3.20px;font-size:12.5px;line-height:14px;color:#000;white-space:nowrap;letter-spacing:0.15px;">application/x–applix–spreadsheet</div></div><div style="left:485px;top:304px;width:109px;height:20px;overflow:hidden;"><div style="left:0;top:3.20px;font-size:12.5px;line-height:14px;color:#000;white-space:nowrap;letter-spacing:0px;">.as</div></div><div style="left:601px;top:304px;width:151px;height:20px;overflow:hidden;"><div style="left:0;top:3.20px;font-size:12.5px;line-height:14px;color:#000;white-space:nowrap;letter-spacing:0px;">none</div></div><div style="left:253px;top:324px;width:15px;height:18px;box-sizing:border-box;background:linear-gradient(135deg,#e8ece8,#ffffff 50%,#d8dcd8);border-right:1px solid #909490;border-bottom:1px solid #909490;border-left:1px solid #e0e4e0;border-top:1px solid #f0f0f0;"></div></div></div>
<div style="left:759px;top:65px;width:14px;height:264px;background:#c0c0c0;"></div>
<div style="left:759px;top:65px;width:13px;height:1px;background:#000000;"></div>
<div style="left:759px;top:65px;width:1px;height:263px;background:#000000;"></div>
<div style="left:759px;top:328px;width:14px;height:1px;background:#ffffff;"></div>
<div style="left:772px;top:65px;width:1px;height:264px;background:#ffffff;"></div>
<svg style="left:760px;top:66px;width:12px;height:12px;" viewBox="0 0 12 12"><polygon points="6,1 11,10.5 1,10.5" fill="#d0d4d0"/><path d="M6 1 L1 10.5" stroke="#fff" stroke-width="1"/><path d="M6 1 L11 10.5" stroke="#000" stroke-width="1.1"/><rect x="2" y="10" width="8" height="1" fill="#000"/></svg>
<div style="left:760px;top:78px;width:12px;height:14px;background:#d0d4d0;"></div>
<div style="left:760px;top:78px;width:11px;height:1px;background:#ffffff;"></div>
<div style="left:760px;top:78px;width:1px;height:13px;background:#ffffff;"></div>
<div style="left:770px;top:78px;width:1px;height:14px;background:#000000;"></div>
<div style="left:760px;top:91px;width:11px;height:1px;background:#000000;"></div>
<svg style="left:760px;top:315px;width:12px;height:12px;" viewBox="0 0 12 12"><polygon points="1,1 11,1 6,11" fill="#d0d4d0"/><path d="M1 1 L6 11" stroke="#fff" stroke-width="1"/><path d="M11 1 L6 11" stroke="#000" stroke-width="1.1"/></svg>
<div style="left:248px;top:361px;width:58px;height:1px;background:#000000;"></div>
<div style="left:248px;top:361px;width:1px;height:58px;background:#000000;"></div>
<div style="left:248px;top:419px;width:59px;height:1px;background:#ffffff;"></div>
<div style="left:306px;top:361px;width:1px;height:59px;background:#ffffff;"></div>
<svg style="position:absolute;left:256px;top:368px;width:40px;height:42px;overflow:visible" viewBox="0 0 40 42"><defs><linearGradient id="afmg" x1="0" y1="0" x2="1" y2="1"><stop offset="0" stop-color="#f4f4f4"/><stop offset="0.5" stop-color="#a8aca8"/><stop offset="1" stop-color="#e8ece8"/></linearGradient></defs><path d="M12 38.5 L36.5 27.5 L37.5 30 L13 41 Z" fill="#000"/><path d="M6 13 L10 9 L24.5 4 L37 27 L11.5 38.5 Z" fill="url(#afmg)" stroke="#000" stroke-width="1.3" stroke-linejoin="round"/><path d="M6 13 L10 9 L9 13 Z" fill="#fff" stroke="#404040" stroke-width="0.6"/><path d="M25 11.5 C19 9 13 13 14.5 20 C16 26.5 23.5 27 27 23.5 L26 18 L21 19.5" stroke="#2848a0" stroke-width="4.6" fill="none" stroke-linejoin="round"/><path d="M25 11.5 C19 9 13 13 14.5 20 C16 26.5 23.5 27 27 23.5 L26 18 L21 19.5" stroke="#ffffff" stroke-width="2.4" fill="none" stroke-linejoin="round"/><rect x="4" y="25" width="14" height="7" fill="#000"/><path d="M5.5 31 V27 L7 26 L8.5 27 V31 M5.5 28.8 H8.5 M10 31 V26.5 H12.5 M10 28.5 H12 M13.5 31 V26.5 L15 29 L16.5 26.5 V31" stroke="#fff" stroke-width="0.9" fill="none"/></svg>
<div style="left:314px;top:356px;width:245px;height:22px;background:#f8fcf8;"></div>
<div style="left:314px;top:356px;width:244px;height:1px;background:#949894;"></div>
<div style="left:314px;top:356px;width:1px;height:21px;background:#949894;"></div>
<div style="left:315px;top:357px;width:242px;height:1px;background:#000000;"></div>
<div style="left:315px;top:357px;width:1px;height:19px;background:#000000;"></div>
<div style="left:314px;top:377px;width:245px;height:1px;background:#ffffff;"></div>
<div style="left:558px;top:356px;width:1px;height:22px;background:#ffffff;"></div>
<div style="left:315px;top:376px;width:243px;height:1px;background:#e8ece8;"></div>
<div style="left:557px;top:357px;width:1px;height:20px;background:#e8ece8;"></div>
<div style="left:318px;top:360.00px;font-size:12.5px;line-height:14px;color:#000;white-space:nowrap;font-family:'Liberation Sans', sans-serif;font-weight:bold;letter-spacing:-0.08px;">Adobe font metrics</div>
<div style="left:315px;top:383.00px;font-size:12.5px;line-height:14px;color:#000;white-space:nowrap;font-family:'Liberation Sans', sans-serif;letter-spacing:0.02px;">application/x–font–afm</div>
<div style="left:314px;top:402px;width:78px;height:22px;background:#d0d4d0;"></div>
<div style="left:314px;top:402px;width:78px;height:1px;background:#ffffff;"></div>
<div style="left:314px;top:402px;width:1px;height:22px;background:#ffffff;"></div>
<div style="left:315px;top:422px;width:76px;height:1px;background:#949894;"></div>
<div style="left:390px;top:403px;width:1px;height:20px;background:#949894;"></div>
<div style="left:314px;top:423px;width:78px;height:1px;background:#000000;"></div>
<div style="left:391px;top:402px;width:1px;height:22px;background:#000000;"></div>
<div style="left:318px;top:406.00px;font-size:12.5px;line-height:14px;color:#000;white-space:nowrap;font-family:'Liberation Sans', sans-serif;letter-spacing:0.15px;">Change Icon</div>
<div style="left:420px;top:402px;width:139px;height:22px;background:#d0d4d0;"></div>
<div style="left:420px;top:402px;width:139px;height:1px;background:#ffffff;"></div>
<div style="left:420px;top:402px;width:1px;height:22px;background:#ffffff;"></div>
<div style="left:421px;top:422px;width:137px;height:1px;background:#949894;"></div>
<div style="left:557px;top:403px;width:1px;height:20px;background:#949894;"></div>
<div style="left:420px;top:423px;width:139px;height:1px;background:#000000;"></div>
<div style="left:558px;top:402px;width:1px;height:22px;background:#000000;"></div>
<div style="left:424px;top:405.50px;font-size:12.5px;line-height:14px;color:#000;white-space:nowrap;font-family:'Liberation Sans', sans-serif;">Change File Extensions</div>
<div style="left:632px;top:355px;width:149px;height:22px;background:#d0d4d0;"></div>
<div style="left:632px;top:355px;width:149px;height:1px;background:#ffffff;"></div>
<div style="left:632px;top:355px;width:1px;height:22px;background:#ffffff;"></div>
<div style="left:633px;top:375px;width:147px;height:1px;background:#949894;"></div>
<div style="left:779px;top:356px;width:1px;height:20px;background:#949894;"></div>
<div style="left:632px;top:376px;width:149px;height:1px;background:#000000;"></div>
<div style="left:780px;top:355px;width:1px;height:22px;background:#000000;"></div>
<div style="left:642px;top:359.00px;font-size:12.5px;line-height:14px;color:#000;white-space:nowrap;font-family:'Liberation Sans', sans-serif;letter-spacing:0.15px;">Add New MIME Type...</div>
<div style="left:632px;top:384px;width:149px;height:22px;background:#d0d4d0;"></div>
<div style="left:632px;top:384px;width:149px;height:1px;background:#ffffff;"></div>
<div style="left:632px;top:384px;width:1px;height:22px;background:#ffffff;"></div>
<div style="left:633px;top:404px;width:147px;height:1px;background:#949894;"></div>
<div style="left:779px;top:385px;width:1px;height:20px;background:#949894;"></div>
<div style="left:632px;top:405px;width:149px;height:1px;background:#000000;"></div>
<div style="left:780px;top:384px;width:1px;height:22px;background:#000000;"></div>
<div style="left:641px;top:388.00px;font-size:12.5px;line-height:14px;color:#000;white-space:nowrap;font-family:'Liberation Sans', sans-serif;letter-spacing:0.17px;">Delete This MIME Type</div>
<div style="left:632px;top:413px;width:149px;height:1px;background:#949894;"></div>
<div style="left:632px;top:414px;width:149px;height:1px;background:#ffffff;"></div>
<div style="left:632px;top:422px;width:149px;height:22px;background:#d0d4d0;"></div>
<div style="left:632px;top:422px;width:149px;height:1px;background:#ffffff;"></div>
<div style="left:632px;top:422px;width:1px;height:22px;background:#ffffff;"></div>
<div style="left:633px;top:442px;width:147px;height:1px;background:#949894;"></div>
<div style="left:779px;top:423px;width:1px;height:20px;background:#949894;"></div>
<div style="left:632px;top:443px;width:149px;height:1px;background:#000000;"></div>
<div style="left:780px;top:422px;width:1px;height:22px;background:#000000;"></div>
<div style="left:635px;top:426.00px;font-size:12.5px;line-height:14px;color:#000;white-space:nowrap;font-family:'Liberation Sans', sans-serif;letter-spacing:-0.06px;">Revert to System Defaults</div>
<div style="left:247px;top:454px;width:311px;height:1px;background:#949894;"></div>
<div style="left:247px;top:454px;width:1px;height:76px;background:#949894;"></div>
<div style="left:248px;top:455px;width:310px;height:1px;background:#ffffff;"></div>
<div style="left:248px;top:455px;width:1px;height:75px;background:#ffffff;"></div>
<div style="left:247px;top:530px;width:312px;height:1px;background:#ffffff;"></div>
<div style="left:558px;top:454px;width:1px;height:77px;background:#ffffff;"></div>
<div style="left:248px;top:529px;width:310px;height:1px;background:#949894;"></div>
<div style="left:557px;top:455px;width:1px;height:75px;background:#949894;"></div>
<div style="left:251px;top:450px;width:86px;height:10px;background:#d0d4d0;"></div>
<div style="left:252px;top:448.00px;font-size:12.5px;line-height:14px;color:#000;white-space:nowrap;font-family:'Liberation Sans', sans-serif;letter-spacing:0.14px;">Default Action:</div>
<svg style="left:256px;top:474px;width:12px;height:12px;" viewBox="0 0 12 12"><polygon points="6,1 11,6 6,11 1,6" fill="#d0d4d0"/><path d="M1 6 L6 1 L11 6" stroke="#fff" stroke-width="1.3" fill="none"/><path d="M1 6 L6 11 L11 6" stroke="#202020" stroke-width="1.3" fill="none"/></svg>
<div style="left:270px;top:473.00px;font-size:12.5px;line-height:14px;color:#000;white-space:nowrap;font-family:'Liberation Sans', sans-serif;letter-spacing:0.12px;">Use Viewer</div>
<svg style="left:348px;top:474px;width:12px;height:12px;" viewBox="0 0 12 12"><polygon points="6,1 11,6 6,11 1,6" fill="#d0d4d0"/><path d="M1 6 L6 1 L11 6" stroke="#404040" stroke-width="1.3" fill="none"/><path d="M1 6 L6 11 L11 6" stroke="#fff" stroke-width="1.3" fill="none"/></svg>
<div style="left:363px;top:473.00px;font-size:12.5px;line-height:14px;color:#000;white-space:nowrap;font-family:'Liberation Sans', sans-serif;letter-spacing:0.2px;">Open With Application</div>
<div style="left:255px;top:496px;width:238px;height:27px;background:#d0d4d0;"></div>
<div style="left:255px;top:496px;width:238px;height:1px;background:#ffffff;"></div>
<div style="left:255px;top:496px;width:1px;height:27px;background:#ffffff;"></div>
<div style="left:256px;top:521px;width:236px;height:1px;background:#949894;"></div>
<div style="left:491px;top:497px;width:1px;height:25px;background:#949894;"></div>
<div style="left:255px;top:522px;width:238px;height:1px;background:#000000;"></div>
<div style="left:492px;top:496px;width:1px;height:27px;background:#000000;"></div>
<div style="left:262px;top:502.00px;font-size:12.5px;line-height:14px;color:#000;white-space:nowrap;font-family:'Liberation Sans', sans-serif;">None</div>
<div style="left:472px;top:506px;width:12px;height:8px;background:#d0d4d0;"></div>
<div style="left:472px;top:506px;width:12px;height:1px;background:#ffffff;"></div>
<div style="left:472px;top:506px;width:1px;height:8px;background:#ffffff;"></div>
<div style="left:473px;top:512px;width:10px;height:1px;background:#949894;"></div>
<div style="left:482px;top:507px;width:1px;height:6px;background:#949894;"></div>
<div style="left:472px;top:513px;width:12px;height:1px;background:#000000;"></div>
<div style="left:483px;top:506px;width:1px;height:8px;background:#000000;"></div>
<div style="left:498px;top:496px;width:54px;height:27px;background:#d0d4d0;"></div>
<div style="left:498px;top:496px;width:54px;height:1px;background:#ffffff;"></div>
<div style="left:498px;top:496px;width:1px;height:27px;background:#ffffff;"></div>
<div style="left:499px;top:521px;width:52px;height:1px;background:#949894;"></div>
<div style="left:550px;top:497px;width:1px;height:25px;background:#949894;"></div>
<div style="left:498px;top:522px;width:54px;height:1px;background:#000000;"></div>
<div style="left:551px;top:496px;width:1px;height:27px;background:#000000;"></div>
<div style="left:503.5px;top:502.50px;font-size:12.5px;line-height:14px;color:#000;white-space:nowrap;font-family:'Liberation Sans', sans-serif;">Edit List</div>
<div style="left:237px;top:545px;width:556px;height:1px;background:#949894;"></div>
<div style="left:237px;top:546px;width:556px;height:1px;background:#ffffff;"></div>
<div style="left:280px;top:556px;width:87px;height:30px;background:#d0d4d0;"></div>
<div style="left:280px;top:556px;width:87px;height:1px;background:#ffffff;"></div>
<div style="left:280px;top:556px;width:1px;height:30px;background:#ffffff;"></div>
<div style="left:281px;top:584px;width:85px;height:1px;background:#949894;"></div>
<div style="left:365px;top:557px;width:1px;height:28px;background:#949894;"></div>
<div style="left:280px;top:585px;width:87px;height:1px;background:#000000;"></div>
<div style="left:366px;top:556px;width:1px;height:30px;background:#000000;"></div>
<div style="left:406px;top:556px;width:87px;height:30px;background:#d0d4d0;"></div>
<div style="left:406px;top:556px;width:87px;height:1px;background:#ffffff;"></div>
<div style="left:406px;top:556px;width:1px;height:30px;background:#ffffff;"></div>
<div style="left:407px;top:584px;width:85px;height:1px;background:#949894;"></div>
<div style="left:491px;top:557px;width:1px;height:28px;background:#949894;"></div>
<div style="left:406px;top:585px;width:87px;height:1px;background:#000000;"></div>
<div style="left:492px;top:556px;width:1px;height:30px;background:#000000;"></div>
<div style="left:532px;top:556px;width:87px;height:30px;background:#d0d4d0;"></div>
<div style="left:532px;top:556px;width:87px;height:1px;background:#ffffff;"></div>
<div style="left:532px;top:556px;width:1px;height:30px;background:#ffffff;"></div>
<div style="left:533px;top:584px;width:85px;height:1px;background:#949894;"></div>
<div style="left:617px;top:557px;width:1px;height:28px;background:#949894;"></div>
<div style="left:532px;top:585px;width:87px;height:1px;background:#000000;"></div>
<div style="left:618px;top:556px;width:1px;height:30px;background:#000000;"></div>
<div style="left:658px;top:556px;width:87px;height:30px;background:#d0d4d0;"></div>
<div style="left:658px;top:556px;width:87px;height:1px;background:#ffffff;"></div>
<div style="left:658px;top:556px;width:1px;height:30px;background:#ffffff;"></div>
<div style="left:659px;top:584px;width:85px;height:1px;background:#949894;"></div>
<div style="left:743px;top:557px;width:1px;height:28px;background:#949894;"></div>
<div style="left:658px;top:585px;width:87px;height:1px;background:#000000;"></div>
<div style="left:744px;top:556px;width:1px;height:30px;background:#000000;"></div>
<div style="left:328px;top:565.00px;font-size:12.5px;line-height:14px;color:#fff;white-space:nowrap;font-family:'Liberation Sans', sans-serif;">Try</div>
<div style="left:327px;top:564.00px;font-size:12.5px;line-height:14px;color:#8c908c;white-space:nowrap;font-family:'Liberation Sans', sans-serif;">Try</div>
<div style="left:446px;top:565.00px;font-size:12.5px;line-height:14px;color:#fff;white-space:nowrap;font-family:'Liberation Sans', sans-serif;">Revert</div>
<div style="left:445px;top:564.00px;font-size:12.5px;line-height:14px;color:#8c908c;white-space:nowrap;font-family:'Liberation Sans', sans-serif;">Revert</div>
<div style="left:577.5px;top:564.00px;font-size:12.5px;line-height:14px;color:#000;white-space:nowrap;font-family:'Liberation Sans', sans-serif;">OK</div>
<div style="left:694px;top:565.00px;font-size:12.5px;line-height:14px;color:#fff;white-space:nowrap;font-family:'Liberation Sans', sans-serif;">Cancel</div>
<div style="left:693px;top:564.00px;font-size:12.5px;line-height:14px;color:#8c908c;white-space:nowrap;font-family:'Liberation Sans', sans-serif;">Cancel</div>
<svg style="position:absolute;left:300px;top:562px;width:24px;height:20px;overflow:visible" viewBox="0 0 24 20"><circle cx="15.5" cy="7.2" r="3.8" fill="#e8d4c4" stroke="#505450" stroke-width="1"/><path d="M8 6 L14.5 6 L14.5 12.5 L12.3 10.6 L9.5 16.5 L4 11 L10 8.3 Z" fill="#b8d4b0" stroke="#404440" stroke-width="1" stroke-linejoin="round" stroke-dasharray="1.2 0.5"/></svg><svg style="position:absolute;left:416px;top:556px;width:30px;height:28px;overflow:visible" viewBox="0 0 30 28"><path d="M5 13.5 L17 7.5 L23.5 19.5 L11.5 25 Z" fill="#b8dcdc" stroke="#404440" stroke-width="1.1" stroke-linejoin="round"/><path d="M7.5 14 L15.5 10 L19 16 L11 20 Z" fill="#e8f0f0"/><path d="M12.5 21 L18.5 18 L20.5 21.5 L14 24.5 Z" fill="#f0f4f4"/><path d="M14 14.5 C15.5 11 13 7.5 9.5 7.5" stroke="#505450" stroke-width="2.2" fill="none"/><path d="M5 7.5 L9.5 4 L9.5 11 Z" fill="#505450"/></svg><svg style="position:absolute;left:550px;top:558px;width:28px;height:26px;overflow:visible" viewBox="0 0 28 26"><path d="M5 15.5 L11.5 9.5 L13 11 L15.5 11 L15.5 4.5 L23 4.5 L23 12.5 L16.5 19 L12.5 19 L11.5 21.5 Z" fill="#98a890" stroke="#101810" stroke-width="1.2" stroke-linejoin="round"/><path d="M16.5 5.5 L22 5.5 L22 11 L16.5 11z" fill="#b0c4a8"/><path d="M7 15.5 L11.5 11 L13 12.5 L21 12.5 L15.5 18 L11.5 18z" fill="#8c9c84"/></svg><svg style="position:absolute;left:668px;top:560px;width:24px;height:22px;overflow:visible" viewBox="0 0 24 22"><path d="M8.5 5.5 C10 9 12 13 14 17 M17 5 C13 9 10 12 6 15" stroke="#404040" stroke-width="3" stroke-linecap="round" fill="none"/><path d="M8.5 5.5 C10 9 12 13 14 17 M17 5 C13 9 10 12 6 15" stroke="#d09090" stroke-width="1.7" stroke-linecap="round" fill="none"/></svg></body></html>
